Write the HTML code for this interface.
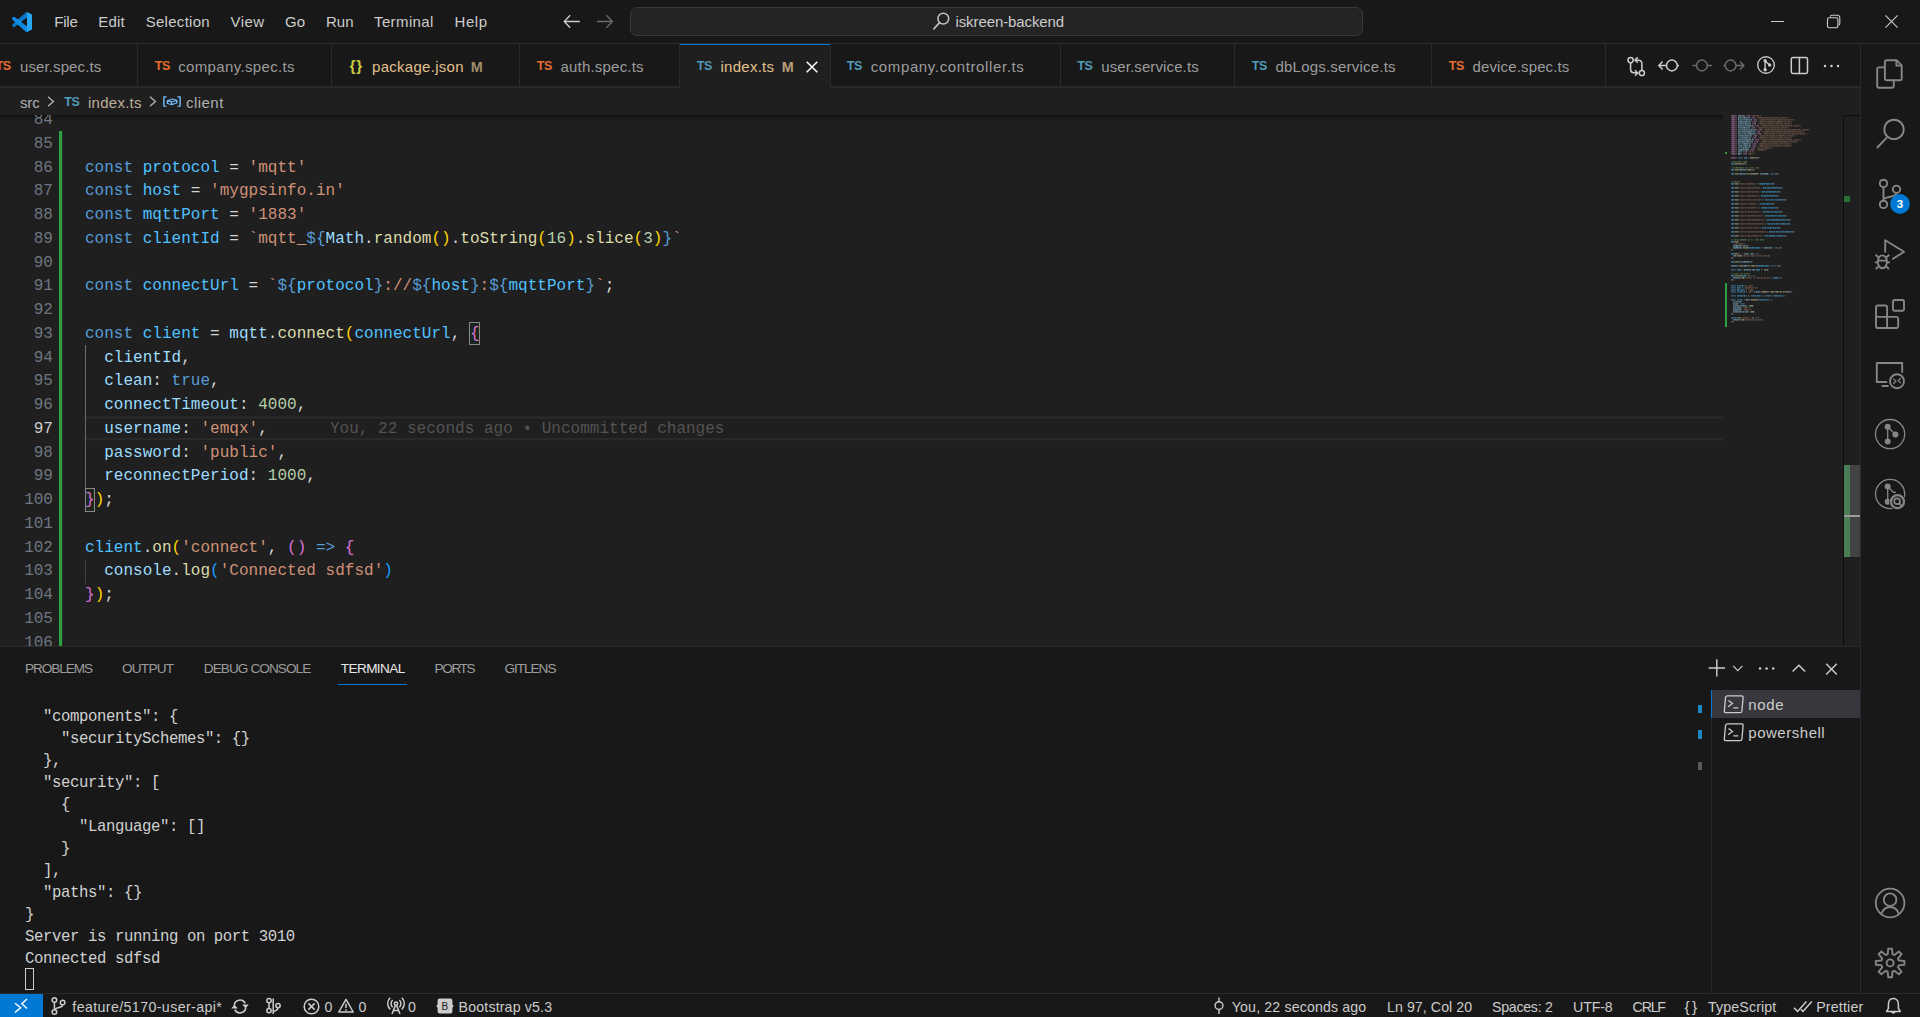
<!DOCTYPE html>
<html lang="en"><head><meta charset="utf-8"><title>index.ts - iskreen-backend - Visual Studio Code</title>
<style>
html,body{margin:0;padding:0}
body{width:1920px;height:1017px;overflow:hidden;position:relative;background:#181818;font-family:"Liberation Sans",sans-serif}
body div,body span,body svg{position:absolute;display:block}
span.s{font-family:"Liberation Sans",sans-serif;line-height:1;white-space:pre}
span.m{font-family:"Liberation Mono",monospace;line-height:1;white-space:pre}
span.m span, span.s span{position:static;display:inline}
svg{overflow:visible}
</style></head>
<body>
<div style="left:0px;top:0px;width:1920px;height:43px;background:#181818;"></div>
<div style="left:0px;top:43px;width:1920px;height:1px;background:#2b2b2b;"></div>
<div style="left:0px;top:44px;width:1860px;height:43px;background:#181818;"></div>
<div style="left:0px;top:86px;width:1860px;height:2px;background:#292929;"></div>
<div style="left:0px;top:88px;width:1860px;height:558px;background:#1f1f1f;"></div>
<div style="left:1860px;top:44px;width:1px;height:949px;background:#2b2b2b;"></div>
<div style="left:1861px;top:44px;width:59px;height:949px;background:#181818;"></div>
<div style="left:0px;top:646px;width:1860px;height:1px;background:#2b2b2b;"></div>
<div style="left:0px;top:647px;width:1860px;height:346px;background:#181818;"></div>
<div style="left:0px;top:993px;width:1920px;height:1px;background:#2b2b2b;"></div>
<div style="left:0px;top:994px;width:1920px;height:23px;background:#181818;"></div>
<span class="s" style="left:54.20px;top:14.30px;font-size:15px;color:#cccccc;letter-spacing:-0.192px;">File</span>
<span class="s" style="left:98.20px;top:14.30px;font-size:15px;color:#cccccc;letter-spacing:0.238px;">Edit</span>
<span class="s" style="left:145.70px;top:14.30px;font-size:15px;color:#cccccc;letter-spacing:0.288px;">Selection</span>
<span class="s" style="left:230.50px;top:14.30px;font-size:15px;color:#cccccc;letter-spacing:0.465px;">View</span>
<span class="s" style="left:285.00px;top:14.30px;font-size:15px;color:#cccccc;letter-spacing:-0.005px;">Go</span>
<span class="s" style="left:326.00px;top:14.30px;font-size:15px;color:#cccccc;letter-spacing:0.028px;">Run</span>
<span class="s" style="left:374.00px;top:14.30px;font-size:15px;color:#cccccc;letter-spacing:0.390px;">Terminal</span>
<span class="s" style="left:454.50px;top:14.30px;font-size:15px;color:#cccccc;letter-spacing:0.563px;">Help</span>
<div style="left:630px;top:7px;width:731px;height:27px;background:#242424;border:1px solid #393939;border-radius:7px;box-sizing:content-box"></div>
<span class="s" style="left:955.50px;top:14.30px;font-size:15px;color:#cccccc;letter-spacing:-0.104px;">iskreen-backend</span>
<div style="left:680px;top:44px;width:150px;height:44px;background:#1f1f1f;"></div>
<div style="left:680px;top:44px;width:150px;height:1px;background:#0078d4;"></div>
<div style="left:137px;top:44px;width:1px;height:43px;background:#2b2b2b;"></div>
<span class="s" style="left:-4.30px;top:59.82px;font-size:12.5px;color:#e56d30;letter-spacing:-0.486px;font-weight:700;">TS</span>
<span class="s" style="left:20.00px;top:59.30px;font-size:15px;color:#9d9d9d;letter-spacing:0.105px;">user.spec.ts</span>
<div style="left:331px;top:44px;width:1px;height:43px;background:#2b2b2b;"></div>
<span class="s" style="left:154.80px;top:59.82px;font-size:12.5px;color:#e56d30;letter-spacing:-0.486px;font-weight:700;">TS</span>
<span class="s" style="left:178.20px;top:59.30px;font-size:15px;color:#9d9d9d;letter-spacing:0.357px;">company.spec.ts</span>
<div style="left:519px;top:44px;width:1px;height:43px;background:#2b2b2b;"></div>
<span class="s" style="left:349.50px;top:58.48px;font-size:15.5px;color:#cbcb41;letter-spacing:0.768px;font-weight:700;">{}</span>
<span class="s" style="left:372.00px;top:59.30px;font-size:15px;color:#e2c08d;letter-spacing:0.284px;">package.json</span>
<div style="left:679px;top:44px;width:1px;height:43px;background:#2b2b2b;"></div>
<span class="s" style="left:536.80px;top:59.82px;font-size:12.5px;color:#e56d30;letter-spacing:-0.486px;font-weight:700;">TS</span>
<span class="s" style="left:560.50px;top:59.30px;font-size:15px;color:#9d9d9d;letter-spacing:0.202px;">auth.spec.ts</span>
<div style="left:830px;top:44px;width:1px;height:43px;background:#2b2b2b;"></div>
<span class="s" style="left:696.80px;top:59.82px;font-size:12.5px;color:#519aba;letter-spacing:-0.486px;font-weight:700;">TS</span>
<span class="s" style="left:720.50px;top:59.30px;font-size:15px;color:#e2c08d;letter-spacing:0.263px;">index.ts</span>
<div style="left:1060px;top:44px;width:1px;height:43px;background:#2b2b2b;"></div>
<span class="s" style="left:846.80px;top:59.82px;font-size:12.5px;color:#519aba;letter-spacing:-0.486px;font-weight:700;">TS</span>
<span class="s" style="left:870.70px;top:59.30px;font-size:15px;color:#9d9d9d;letter-spacing:0.628px;">company.controller.ts</span>
<div style="left:1234px;top:44px;width:1px;height:43px;background:#2b2b2b;"></div>
<span class="s" style="left:1077.30px;top:59.82px;font-size:12.5px;color:#519aba;letter-spacing:-0.486px;font-weight:700;">TS</span>
<span class="s" style="left:1101.20px;top:59.30px;font-size:15px;color:#9d9d9d;letter-spacing:0.116px;">user.service.ts</span>
<div style="left:1431px;top:44px;width:1px;height:43px;background:#2b2b2b;"></div>
<span class="s" style="left:1251.80px;top:59.82px;font-size:12.5px;color:#519aba;letter-spacing:-0.486px;font-weight:700;">TS</span>
<span class="s" style="left:1275.50px;top:59.30px;font-size:15px;color:#9d9d9d;letter-spacing:0.210px;">dbLogs.service.ts</span>
<div style="left:1605px;top:44px;width:1px;height:43px;background:#2b2b2b;"></div>
<span class="s" style="left:1448.80px;top:59.82px;font-size:12.5px;color:#e56d30;letter-spacing:-0.486px;font-weight:700;">TS</span>
<span class="s" style="left:1472.50px;top:59.30px;font-size:15px;color:#9d9d9d;letter-spacing:0.140px;">device.spec.ts</span>
<div style="left:679px;top:44px;width:1px;height:43px;background:#2b2b2b;"></div>
<span class="s" style="left:470.80px;top:59.81px;font-size:14.4px;color:#a08c6a;font-weight:700;">M</span>
<span class="s" style="left:781.80px;top:59.81px;font-size:14.4px;color:#b8a07a;font-weight:700;">M</span>
<svg style="left:806px;top:60.5px" width="12" height="12" viewBox="0 0 12 12"><path d="M0.7 0.7 L11.3 11.3 M11.3 0.7 L0.7 11.3" stroke="#ffffff" stroke-width="1.5" fill="none"/></svg>
<span class="s" style="left:20.00px;top:94.80px;font-size:15px;color:#b0b0b0;letter-spacing:-0.132px;">src</span>
<span class="s" style="left:88.00px;top:94.80px;font-size:15px;color:#bcae98;letter-spacing:0.263px;">index.ts</span>
<span class="s" style="left:186.00px;top:94.80px;font-size:15px;color:#b0b0b0;letter-spacing:0.464px;">client</span>
<span class="s" style="left:64.30px;top:95.62px;font-size:12.5px;color:#519aba;letter-spacing:-0.486px;font-weight:700;">TS</span>
<svg style="left:47px;top:96.2px" width="8" height="11" viewBox="0 0 8 11"><path d="M1 0.8 L6.4 5.5 L1 10.2" stroke="#b0b0b0" stroke-width="1.4" fill="none"/></svg>
<svg style="left:149.4px;top:96.2px" width="8" height="11" viewBox="0 0 8 11"><path d="M1 0.8 L6.4 5.5 L1 10.2" stroke="#b0b0b0" stroke-width="1.4" fill="none"/></svg>
<svg style="left:163px;top:96px" width="18" height="11.6" viewBox="0 0 18 16" preserveAspectRatio="none"><g stroke="#75beff" stroke-width="1.4" fill="none"><path d="M3.6 1.2 H0.9 V14.2 H3.6"/><path d="M14.4 1.2 H17.1 V14.2 H14.4"/><path d="M4.4 6.6 L9.6 4.2 L13.8 5.9 V9.6 L8.6 12 L4.4 10.3 Z M4.4 6.6 L8.6 8.3 L13.8 5.9 M8.6 8.3 V12"/></g></svg>
<div style="left:0;top:115px;width:1723px;height:6px;background:linear-gradient(#000000 0%,rgba(0,0,0,0.55) 30%,rgba(0,0,0,0) 100%);opacity:0.55"></div>
<svg style="left:12px;top:12px;" width="20" height="20" viewBox="0 0 100 100"><defs><clipPath id="vc"><path clip-rule="evenodd" d="M96.46 10.8 L75.86 .88 a6.23 6.23 0 0 0 -7.1 1.2 L29.35 38.04 12.17 25 a4.16 4.16 0 0 0 -5.32 .24 l-5.5 5 a4.17 4.17 0 0 0 0 6.16 L16.25 50 1.35 63.6 a4.17 4.17 0 0 0 0 6.16 l5.5 5 a4.16 4.16 0 0 0 5.32 .24 l17.18 -13.04 39.4 35.96 a6.22 6.22 0 0 0 7.1 1.2 l20.6 -9.9 A6.25 6.25 0 0 0 100 83.6 V16.4 a6.25 6.25 0 0 0 -3.54 -5.6 Z M75 72.7 L45.1 50 75 27.3 Z"/></clipPath></defs>
<g clip-path="url(#vc)"><rect width="100" height="100" fill="#0b76c4"/><polygon points="0,22 14,20 78,70 78,100 66,100 0,40" fill="#0d8be0"/><rect x="74.6" y="0" width="26" height="100" fill="#27a6f4"/></g></svg>
<svg style="left:563px;top:14px;" width="18" height="15" viewBox="0 0 18 15"><path d="M16.8 7.5 H1.2 M7.2 1.2 L1.2 7.5 L7.2 13.8" stroke="#cccccc" stroke-width="1.3" fill="none"/></svg>
<svg style="left:596px;top:14px;" width="18" height="15" viewBox="0 0 18 15"><path d="M1 7.5 H16.4 M10.4 1.2 L16.4 7.5 L10.4 13.8" stroke="#6e6e6e" stroke-width="1.3" fill="none"/></svg>
<svg style="left:932px;top:11px;" width="20" height="20" viewBox="0 0 20 20"><circle cx="11.3" cy="7.6" r="5.4" stroke="#c4c4c4" stroke-width="1.5" fill="none"/><path d="M7.6 11.6 L1.4 18.4" stroke="#c4c4c4" stroke-width="1.6" fill="none"/></svg>
<div style="left:1771px;top:21px;width:13px;height:1px;background:#cccccc;"></div>
<svg style="left:1826px;top:14px;" width="15" height="15" viewBox="0 0 15 15"><rect x="1.5" y="3.8" width="10.4" height="10" rx="1.7" stroke="#cccccc" stroke-width="1.1" fill="none"/><path d="M4.3 2.5 a1.7 1.7 0 0 1 1.5 -1.3 H11.2 a2.6 2.6 0 0 1 2.6 2.6 V9.6 a1.7 1.7 0 0 1 -1.3 1.6" stroke="#cccccc" stroke-width="1.1" fill="none"/></svg>
<svg style="left:1885px;top:15px;" width="13" height="13" viewBox="0 0 13 13"><path d="M0.4 0.4 L12.6 12.6 M12.6 0.4 L0.4 12.6" stroke="#cccccc" stroke-width="1.1" fill="none"/></svg>
<svg style="left:1626px;top:55px;" width="22" height="22" viewBox="0 0 22 22"><g stroke="#cccccc" stroke-width="1.5" fill="none">
<circle cx="4.6" cy="5.1" r="2.6"/><circle cx="15.9" cy="18" r="2.6"/>
<path d="M4.6 7.7 V14.6 a3.2 3.2 0 0 0 3.2 3.2 H11.4 M9 15.2 L11.8 17.9 L9 20.6"/>
<path d="M15.9 15.4 V8.4 a3.2 3.2 0 0 0 -3.2 -3.2 H9.4 M11.8 2.4 L9 5.1 L11.8 7.8"/></g></svg>
<svg style="left:1657px;top:57px;" width="24" height="17" viewBox="0 0 24 17"><g stroke="#cccccc" stroke-width="1.5" fill="none"><circle cx="14.9" cy="8.5" r="5.4"/><path d="M9.4 8.5 H1.8 M5.6 4.6 L1.8 8.5 L5.6 12.4 M20.4 8.5 H22"/></g></svg>
<svg style="left:1691px;top:57px;" width="22" height="17" viewBox="0 0 22 17"><g stroke="#6b6b6b" stroke-width="1.5" fill="none"><circle cx="10.9" cy="8.5" r="5.4"/><path d="M1.5 8.5 H5.4 M16.4 8.5 H20.9"/></g></svg>
<svg style="left:1722px;top:57px;" width="24" height="17" viewBox="0 0 24 17"><g stroke="#6b6b6b" stroke-width="1.5" fill="none"><circle cx="8.6" cy="8.5" r="5.4"/><path d="M14.1 8.5 H21.8 M18 4.6 L21.8 8.5 L18 12.4 M1.5 8.5 H3.1"/></g></svg>
<svg style="left:1757px;top:56px;" width="18" height="18" viewBox="0 0 20 20"><circle cx="10" cy="10" r="9.2" stroke="#cccccc" stroke-width="1.5" fill="none"/>
<path d="M9 5.2 V15.2 M9 5.6 L14 10" stroke="#cccccc" stroke-width="1.5" fill="none"/>
<circle cx="9" cy="5.2" r="1.9" fill="#cccccc"/><circle cx="9" cy="15.2" r="1.9" fill="#cccccc"/><circle cx="14" cy="10" r="1.9" fill="#cccccc"/></svg>
<svg style="left:1790px;top:56px;" width="19" height="19" viewBox="0 0 19 19"><g stroke="#cccccc" stroke-width="1.5" fill="none"><rect x="1.3" y="1.6" width="16.2" height="15.8" rx="1.6"/><path d="M9.4 1.6 V17.4"/></g></svg>
<svg style="left:1822px;top:63px;" width="20" height="6" viewBox="0 0 20 6"><circle cx="3" cy="3.1" r="1.25" fill="#cccccc"/><circle cx="9.5" cy="3.1" r="1.25" fill="#cccccc"/><circle cx="16" cy="3.1" r="1.25" fill="#cccccc"/></svg>
<svg style="left:0;top:0" width="1920" height="1017" viewBox="0 0 1920 1017"><g stroke="#868686" stroke-width="1.9" fill="none" stroke-linejoin="round">
<!-- files -->
<path d="M1884.9 79.2 V62 a1.8 1.8 0 0 1 1.8 -1.8 H1896.6 L1901.7 65.3 V78.4 a1.8 1.8 0 0 1 -1.8 1.8 H1886.7 a1.8 1.8 0 0 1 -1.8 -1.8 Z"/>
<path d="M1896.4 60.6 V65.6 H1901.4"/>
<path d="M1884.6 67.4 H1879 a1.8 1.8 0 0 0 -1.8 1.8 V86 a1.8 1.8 0 0 0 1.8 1.8 H1892 a1.8 1.8 0 0 0 1.8 -1.8 V80.6"/>
<!-- search -->
<circle cx="1894" cy="129.4" r="9.7"/>
<path d="M1887 137.4 L1876.9 148"/>
<!-- scm -->
<circle cx="1883.5" cy="183.4" r="3.7"/><circle cx="1883.5" cy="204.4" r="3.7"/><circle cx="1896.5" cy="189.3" r="3.7"/>
<path d="M1883.5 187.1 V200.7 M1896.5 193 C1896.5 197.2 1889 196 1884 198.6"/>
<!-- debug -->
<path d="M1885.2 252.5 V240.3 L1904 251.8 L1892.2 259.3"/>
<ellipse cx="1882.4" cy="261.8" rx="4.6" ry="6.4"/>
<path d="M1877.8 260.6 H1887 M1878.4 257.4 L1875.6 254.8 M1886.4 257.4 L1889.2 254.8 M1877.8 262.4 H1874.8 M1887 262.4 H1890 M1878.6 266.4 L1875.8 269 M1886.2 266.4 L1889 269"/>
<!-- extensions -->
<path d="M1887.1 316.9 V307.3 a1.8 1.8 0 0 0 -1.8 -1.8 H1877.8 a1.8 1.8 0 0 0 -1.8 1.8 V326.2 a1.8 1.8 0 0 0 1.8 1.8 H1896.4 a1.8 1.8 0 0 0 1.8 -1.8 V318.7 a1.8 1.8 0 0 0 -1.8 -1.8 Z M1876 316.9 H1887.1 V328"/>
<rect x="1893" y="300" width="11" height="10.8" rx="1.8"/>
<!-- remote explorer -->
<path d="M1902.2 372.8 V363 H1876.8 V382 H1887.2 M1881.6 386 H1888.6"/>
<circle cx="1897" cy="381.2" r="7"/>
</g>
<path d="M1893.2 378.6 L1896 381.2 L1893.2 383.8 M1900.8 378.2 L1898.2 380.6 L1900.8 383" stroke="#868686" stroke-width="1.2" fill="none"/>
<!-- gitlens -->
<g stroke="#868686" stroke-width="1.3" fill="none">
<circle cx="1890.1" cy="434.1" r="14.6"/>
<path d="M1887.7 426.7 V441.4 M1887.7 426.7 L1895.4 434.5"/>
<circle cx="1890.1" cy="494" r="14.6"/>
<path d="M1887.7 486.6 V501.7 M1887.7 486.6 L1893.4 492.3 H1896"/>
</g>
<g fill="#868686"><circle cx="1887.7" cy="426.7" r="3"/><circle cx="1887.7" cy="441.4" r="3"/><circle cx="1895.4" cy="434.5" r="3"/>
<circle cx="1887.7" cy="486.6" r="3"/><circle cx="1887.7" cy="501.7" r="3"/></g>
<circle cx="1897.5" cy="501.7" r="8.4" fill="#181818"/>
<circle cx="1897.5" cy="501.7" r="6.5" fill="none" stroke="#868686" stroke-width="2.3"/>
<circle cx="1897.1" cy="501.3" r="2.9" fill="none" stroke="#868686" stroke-width="1.8"/>
<path d="M1899.4 503.6 L1902 506.2" stroke="#868686" stroke-width="1.8"/>
<!-- account -->
<g stroke="#868686" stroke-width="1.8" fill="none">
<circle cx="1890.1" cy="903" r="14.3"/>
<circle cx="1890.1" cy="899.7" r="6.3"/>
<path d="M1881.4 913.6 C1883 909.4 1886 907 1890.1 907 C1894.2 907 1897.2 909.4 1898.8 913.6"/>
<!-- gear -->
<path d="M1887.59 954.26 L1888.30 948.61 L1891.90 948.61 L1892.61 954.26 L1894.44 955.01 L1898.93 951.52 L1901.48 954.07 L1897.99 958.56 L1898.74 960.39 L1904.39 961.10 L1904.39 964.70 L1898.74 965.41 L1897.99 967.24 L1901.48 971.73 L1898.93 974.28 L1894.44 970.79 L1892.61 971.54 L1891.90 977.19 L1888.30 977.19 L1887.59 971.54 L1885.76 970.79 L1881.27 974.28 L1878.72 971.73 L1882.21 967.24 L1881.46 965.41 L1875.81 964.70 L1875.81 961.10 L1881.46 960.39 L1882.21 958.56 L1878.72 954.07 L1881.27 951.52 L1885.76 955.01 Z" stroke-width="1.9" stroke-linejoin="miter"/>
<circle cx="1890.1" cy="962.9" r="3.5" stroke-width="1.9"/>
</g>
<!-- badge -->
<circle cx="1900" cy="204" r="9.9" fill="#0078d4"/>
</svg>
<span class="s" style="left:1896.80px;top:199.17px;font-size:11.5px;color:#ffffff;font-weight:700;">3</span>
<div style="left:0;top:115px;width:1723px;height:531px;overflow:hidden">
<svg style="left:0;top:0" width="1723" height="531" viewBox="0 0 1723 531"><rect x="85.6" y="301.30" width="1640" height="2.4" fill="#292929"/><rect x="85.6" y="322.80" width="1640" height="2.4" fill="#292929"/><rect x="59.0" y="16.00" width="3.1" height="520" fill="#2ea043"/></svg>
<div style="left:85px;top:230.25px;width:1px;height:142.5px;background:#6a6a6a;"></div>
<div style="left:85px;top:444.0px;width:1px;height:23.75px;background:#404040;"></div>
<div style="left:469.30px;top:206.50px;width:10.22px;height:23.75px;border:1px solid #888888;background:rgba(0,100,0,0.1);box-sizing:border-box"></div>
<div style="left:84.50px;top:372.75px;width:10.22px;height:23.75px;border:1px solid #888888;background:rgba(0,100,0,0.1);box-sizing:border-box"></div>
<span class="m" style="left:33.76px;top:-2.92px;font-size:16px;letter-spacing:0.020px;color:#6e7681">84</span>
<span class="m" style="left:33.76px;top:20.83px;font-size:16px;letter-spacing:0.020px;color:#6e7681">85</span>
<span class="m" style="left:33.76px;top:44.58px;font-size:16px;letter-spacing:0.020px;color:#6e7681">86</span>
<span class="m" style="left:85px;top:44.58px;font-size:16px;letter-spacing:0.020px"><span style="color:#569cd6">const</span><span style="color:#4fc1ff"> protocol</span><span style="color:#d4d4d4"> = </span><span style="color:#ce9178">'mqtt'</span></span>
<span class="m" style="left:33.76px;top:68.33px;font-size:16px;letter-spacing:0.020px;color:#6e7681">87</span>
<span class="m" style="left:85px;top:68.33px;font-size:16px;letter-spacing:0.020px"><span style="color:#569cd6">const</span><span style="color:#4fc1ff"> host</span><span style="color:#d4d4d4"> = </span><span style="color:#ce9178">'mygpsinfo.in'</span></span>
<span class="m" style="left:33.76px;top:92.08px;font-size:16px;letter-spacing:0.020px;color:#6e7681">88</span>
<span class="m" style="left:85px;top:92.08px;font-size:16px;letter-spacing:0.020px"><span style="color:#569cd6">const</span><span style="color:#4fc1ff"> mqttPort</span><span style="color:#d4d4d4"> = </span><span style="color:#ce9178">'1883'</span></span>
<span class="m" style="left:33.76px;top:115.83px;font-size:16px;letter-spacing:0.020px;color:#6e7681">89</span>
<span class="m" style="left:85px;top:115.83px;font-size:16px;letter-spacing:0.020px"><span style="color:#569cd6">const</span><span style="color:#4fc1ff"> clientId</span><span style="color:#d4d4d4"> = </span><span style="color:#ce9178">`mqtt_</span><span style="color:#569cd6">${</span><span style="color:#9cdcfe">Math</span><span style="color:#d4d4d4">.</span><span style="color:#dcdcaa">random</span><span style="color:#ffd700">()</span><span style="color:#d4d4d4">.</span><span style="color:#dcdcaa">toString</span><span style="color:#ffd700">(</span><span style="color:#b5cea8">16</span><span style="color:#ffd700">)</span><span style="color:#d4d4d4">.</span><span style="color:#dcdcaa">slice</span><span style="color:#ffd700">(</span><span style="color:#b5cea8">3</span><span style="color:#ffd700">)</span><span style="color:#569cd6">}</span><span style="color:#ce9178">`</span></span>
<span class="m" style="left:33.76px;top:139.58px;font-size:16px;letter-spacing:0.020px;color:#6e7681">90</span>
<span class="m" style="left:33.76px;top:163.33px;font-size:16px;letter-spacing:0.020px;color:#6e7681">91</span>
<span class="m" style="left:85px;top:163.33px;font-size:16px;letter-spacing:0.020px"><span style="color:#569cd6">const</span><span style="color:#4fc1ff"> connectUrl</span><span style="color:#d4d4d4"> = </span><span style="color:#ce9178">`</span><span style="color:#569cd6">${</span><span style="color:#4fc1ff">protocol</span><span style="color:#569cd6">}</span><span style="color:#ce9178">://</span><span style="color:#569cd6">${</span><span style="color:#4fc1ff">host</span><span style="color:#569cd6">}</span><span style="color:#ce9178">:</span><span style="color:#569cd6">${</span><span style="color:#4fc1ff">mqttPort</span><span style="color:#569cd6">}</span><span style="color:#ce9178">`</span><span style="color:#d4d4d4">;</span></span>
<span class="m" style="left:33.76px;top:187.08px;font-size:16px;letter-spacing:0.020px;color:#6e7681">92</span>
<span class="m" style="left:33.76px;top:210.83px;font-size:16px;letter-spacing:0.020px;color:#6e7681">93</span>
<span class="m" style="left:85px;top:210.83px;font-size:16px;letter-spacing:0.020px"><span style="color:#569cd6">const</span><span style="color:#4fc1ff"> client</span><span style="color:#d4d4d4"> = </span><span style="color:#9cdcfe">mqtt</span><span style="color:#d4d4d4">.</span><span style="color:#dcdcaa">connect</span><span style="color:#ffd700">(</span><span style="color:#4fc1ff">connectUrl</span><span style="color:#d4d4d4">, </span><span style="color:#da70d6">{</span></span>
<span class="m" style="left:33.76px;top:234.58px;font-size:16px;letter-spacing:0.020px;color:#6e7681">94</span>
<span class="m" style="left:85px;top:234.58px;font-size:16px;letter-spacing:0.020px"><span style="color:#9cdcfe">  clientId</span><span style="color:#d4d4d4">,</span></span>
<span class="m" style="left:33.76px;top:258.33px;font-size:16px;letter-spacing:0.020px;color:#6e7681">95</span>
<span class="m" style="left:85px;top:258.33px;font-size:16px;letter-spacing:0.020px"><span style="color:#9cdcfe">  clean</span><span style="color:#d4d4d4">: </span><span style="color:#569cd6">true</span><span style="color:#d4d4d4">,</span></span>
<span class="m" style="left:33.76px;top:282.08px;font-size:16px;letter-spacing:0.020px;color:#6e7681">96</span>
<span class="m" style="left:85px;top:282.08px;font-size:16px;letter-spacing:0.020px"><span style="color:#9cdcfe">  connectTimeout</span><span style="color:#d4d4d4">: </span><span style="color:#b5cea8">4000</span><span style="color:#d4d4d4">,</span></span>
<span class="m" style="left:33.76px;top:305.83px;font-size:16px;letter-spacing:0.020px;color:#cccccc">97</span>
<span class="m" style="left:85px;top:305.83px;font-size:16px;letter-spacing:0.020px"><span style="color:#9cdcfe">  username</span><span style="color:#d4d4d4">: </span><span style="color:#ce9178">'emqx'</span><span style="color:#d4d4d4">,</span></span>
<span class="m" style="left:33.76px;top:329.58px;font-size:16px;letter-spacing:0.020px;color:#6e7681">98</span>
<span class="m" style="left:85px;top:329.58px;font-size:16px;letter-spacing:0.020px"><span style="color:#9cdcfe">  password</span><span style="color:#d4d4d4">: </span><span style="color:#ce9178">'public'</span><span style="color:#d4d4d4">,</span></span>
<span class="m" style="left:33.76px;top:353.33px;font-size:16px;letter-spacing:0.020px;color:#6e7681">99</span>
<span class="m" style="left:85px;top:353.33px;font-size:16px;letter-spacing:0.020px"><span style="color:#9cdcfe">  reconnectPeriod</span><span style="color:#d4d4d4">: </span><span style="color:#b5cea8">1000</span><span style="color:#d4d4d4">,</span></span>
<span class="m" style="left:24.14px;top:377.08px;font-size:16px;letter-spacing:0.020px;color:#6e7681">100</span>
<span class="m" style="left:85px;top:377.08px;font-size:16px;letter-spacing:0.020px"><span style="color:#da70d6">}</span><span style="color:#ffd700">)</span><span style="color:#d4d4d4">;</span></span>
<span class="m" style="left:24.14px;top:400.83px;font-size:16px;letter-spacing:0.020px;color:#6e7681">101</span>
<span class="m" style="left:24.14px;top:424.58px;font-size:16px;letter-spacing:0.020px;color:#6e7681">102</span>
<span class="m" style="left:85px;top:424.58px;font-size:16px;letter-spacing:0.020px"><span style="color:#4fc1ff">client</span><span style="color:#d4d4d4">.</span><span style="color:#dcdcaa">on</span><span style="color:#ffd700">(</span><span style="color:#ce9178">'connect'</span><span style="color:#d4d4d4">, </span><span style="color:#da70d6">()</span><span style="color:#d4d4d4"> </span><span style="color:#569cd6">=&gt;</span><span style="color:#d4d4d4"> </span><span style="color:#da70d6">{</span></span>
<span class="m" style="left:24.14px;top:448.33px;font-size:16px;letter-spacing:0.020px;color:#6e7681">103</span>
<span class="m" style="left:85px;top:448.33px;font-size:16px;letter-spacing:0.020px"><span style="color:#9cdcfe">  console</span><span style="color:#d4d4d4">.</span><span style="color:#dcdcaa">log</span><span style="color:#179fff">(</span><span style="color:#ce9178">'Connected sdfsd'</span><span style="color:#179fff">)</span></span>
<span class="m" style="left:24.14px;top:472.08px;font-size:16px;letter-spacing:0.020px;color:#6e7681">104</span>
<span class="m" style="left:85px;top:472.08px;font-size:16px;letter-spacing:0.020px"><span style="color:#da70d6">}</span><span style="color:#ffd700">)</span><span style="color:#d4d4d4">;</span></span>
<span class="m" style="left:24.14px;top:495.83px;font-size:16px;letter-spacing:0.020px;color:#6e7681">105</span>
<span class="m" style="left:24.14px;top:519.58px;font-size:16px;letter-spacing:0.020px;color:#6e7681">106</span>
<span class="m" style="left:330px;top:305.83px;font-size:16px;letter-spacing:0.020px;color:#535353">You, 22 seconds ago • Uncommitted changes</span>
</div>
<svg style="left:1731px;top:115px;" width="120" height="215" viewBox="0 0 120 215"><path fill="#c586c0" fill-opacity="0.40" d="M0 0.2h1v1.4h-1zM4 0.2h2v1.4h-2zM15 0.2h2v1.4h-2zM0 2.2h1v1.4h-1zM4 2.2h2v1.4h-2zM20 2.2h2v1.4h-2zM0 4.2h1v1.4h-1zM4 4.2h2v1.4h-2zM22 4.2h2v1.4h-2zM0 6.2h1v1.4h-1zM4 6.2h2v1.4h-2zM21 6.2h2v1.4h-2zM0 8.2h1v1.4h-1zM4 8.2h2v1.4h-2zM21 8.2h2v1.4h-2zM0 10.2h1v1.4h-1zM4 10.2h2v1.4h-2zM24 10.2h2v1.4h-2zM0 12.2h1v1.4h-1zM4 12.2h2v1.4h-2zM20 12.2h2v1.4h-2zM0 14.2h1v1.4h-1zM4 14.2h2v1.4h-2zM27 14.2h2v1.4h-2zM0 16.2h1v1.4h-1zM4 16.2h2v1.4h-2zM25 16.2h2v1.4h-2zM0 18.2h1v1.4h-1zM4 18.2h2v1.4h-2zM26 18.2h2v1.4h-2zM0 20.2h1v1.4h-1zM4 20.2h2v1.4h-2zM22 20.2h2v1.4h-2zM0 22.2h1v1.4h-1zM4 22.2h2v1.4h-2zM21 22.2h2v1.4h-2zM0 24.2h1v1.4h-1zM4 24.2h2v1.4h-2zM24 24.2h2v1.4h-2zM0 26.2h1v1.4h-1zM4 26.2h2v1.4h-2zM23 26.2h2v1.4h-2zM0 28.2h1v1.4h-1zM4 28.2h2v1.4h-2zM21 28.2h2v1.4h-2zM0 30.2h1v1.4h-1zM4 30.2h2v1.4h-2zM21 30.2h2v1.4h-2zM0 32.2h1v1.4h-1zM4 32.2h2v1.4h-2zM20 32.2h2v1.4h-2zM0 34.2h1v1.4h-1zM4 34.2h2v1.4h-2zM19 34.2h2v1.4h-2zM0 36.2h1v1.4h-1zM4 36.2h2v1.4h-2zM12 36.2h2v1.4h-2zM0 38.2h1v1.4h-1zM4 38.2h2v1.4h-2zM12 38.2h2v1.4h-2zM4 42.2h2v1.4h-2z"/><path fill="#c586c0" fill-opacity="0.72" d="M1 0.2h2v1.4h-2zM18 0.2h1v1.4h-1zM1 2.2h2v1.4h-2zM23 2.2h1v1.4h-1zM1 4.2h2v1.4h-2zM25 4.2h1v1.4h-1zM1 6.2h2v1.4h-2zM24 6.2h1v1.4h-1zM1 8.2h2v1.4h-2zM24 8.2h1v1.4h-1zM1 10.2h2v1.4h-2zM27 10.2h1v1.4h-1zM1 12.2h2v1.4h-2zM23 12.2h1v1.4h-1zM1 14.2h2v1.4h-2zM30 14.2h1v1.4h-1zM1 16.2h2v1.4h-2zM28 16.2h1v1.4h-1zM1 18.2h2v1.4h-2zM29 18.2h1v1.4h-1zM1 20.2h2v1.4h-2zM25 20.2h1v1.4h-1zM1 22.2h2v1.4h-2zM24 22.2h1v1.4h-1zM1 24.2h2v1.4h-2zM27 24.2h1v1.4h-1zM1 26.2h2v1.4h-2zM26 26.2h1v1.4h-1zM1 28.2h2v1.4h-2zM24 28.2h1v1.4h-1zM1 30.2h2v1.4h-2zM24 30.2h1v1.4h-1zM1 32.2h2v1.4h-2zM23 32.2h1v1.4h-1zM1 34.2h2v1.4h-2zM22 34.2h1v1.4h-1zM1 36.2h2v1.4h-2zM15 36.2h1v1.4h-1zM1 38.2h2v1.4h-2zM15 38.2h1v1.4h-1zM2 42.2h1v1.4h-1z"/><path fill="#c586c0" fill-opacity="0.55" d="M3 0.2h1v1.4h-1zM17 0.2h1v1.4h-1zM3 2.2h1v1.4h-1zM22 2.2h1v1.4h-1zM3 4.2h1v1.4h-1zM24 4.2h1v1.4h-1zM3 6.2h1v1.4h-1zM23 6.2h1v1.4h-1zM3 8.2h1v1.4h-1zM23 8.2h1v1.4h-1zM3 10.2h1v1.4h-1zM26 10.2h1v1.4h-1zM3 12.2h1v1.4h-1zM22 12.2h1v1.4h-1zM3 14.2h1v1.4h-1zM29 14.2h1v1.4h-1zM3 16.2h1v1.4h-1zM27 16.2h1v1.4h-1zM3 18.2h1v1.4h-1zM28 18.2h1v1.4h-1zM3 20.2h1v1.4h-1zM24 20.2h1v1.4h-1zM3 22.2h1v1.4h-1zM23 22.2h1v1.4h-1zM3 24.2h1v1.4h-1zM26 24.2h1v1.4h-1zM3 26.2h1v1.4h-1zM25 26.2h1v1.4h-1zM3 28.2h1v1.4h-1zM23 28.2h1v1.4h-1zM3 30.2h1v1.4h-1zM23 30.2h1v1.4h-1zM3 32.2h1v1.4h-1zM22 32.2h1v1.4h-1zM3 34.2h1v1.4h-1zM21 34.2h1v1.4h-1zM3 36.2h1v1.4h-1zM14 36.2h1v1.4h-1zM3 38.2h1v1.4h-1zM14 38.2h1v1.4h-1zM0 42.2h2v1.4h-2zM3 42.2h1v1.4h-1z"/><path fill="#9cdcfe" fill-opacity="0.55" d="M7 0.2h2v1.4h-2zM11 0.2h3v1.4h-3zM8 2.2h2v1.4h-2zM11 2.2h2v1.4h-2zM14 2.2h2v1.4h-2zM17 2.2h2v1.4h-2zM9 4.2h2v1.4h-2zM13 4.2h1v1.4h-1zM16 4.2h2v1.4h-2zM19 4.2h2v1.4h-2zM7 6.2h2v1.4h-2zM11 6.2h3v1.4h-3zM15 6.2h2v1.4h-2zM18 6.2h2v1.4h-2zM7 8.2h3v1.4h-3zM11 8.2h2v1.4h-2zM15 8.2h2v1.4h-2zM18 8.2h2v1.4h-2zM8 10.2h1v1.4h-1zM12 10.2h2v1.4h-2zM15 10.2h2v1.4h-2zM18 10.2h2v1.4h-2zM21 10.2h2v1.4h-2zM7 12.2h2v1.4h-2zM10 12.2h3v1.4h-3zM14 12.2h2v1.4h-2zM17 12.2h2v1.4h-2zM7 14.2h2v1.4h-2zM10 14.2h6v1.4h-6zM17 14.2h2v1.4h-2zM21 14.2h2v1.4h-2zM24 14.2h2v1.4h-2zM8 16.2h2v1.4h-2zM11 16.2h2v1.4h-2zM15 16.2h2v1.4h-2zM19 16.2h2v1.4h-2zM22 16.2h2v1.4h-2zM7 18.2h2v1.4h-2zM13 18.2h2v1.4h-2zM17 18.2h2v1.4h-2zM20 18.2h2v1.4h-2zM23 18.2h2v1.4h-2zM7 20.2h4v1.4h-4zM12 20.2h1v1.4h-1zM14 20.2h1v1.4h-1zM16 20.2h2v1.4h-2zM19 20.2h2v1.4h-2zM9 22.2h5v1.4h-5zM15 22.2h2v1.4h-2zM18 22.2h2v1.4h-2zM8 24.2h2v1.4h-2zM11 24.2h4v1.4h-4zM16 24.2h1v1.4h-1zM18 24.2h2v1.4h-2zM21 24.2h2v1.4h-2zM8 26.2h3v1.4h-3zM12 26.2h2v1.4h-2zM17 26.2h2v1.4h-2zM20 26.2h2v1.4h-2zM12 28.2h1v1.4h-1zM15 28.2h2v1.4h-2zM18 28.2h2v1.4h-2zM8 30.2h1v1.4h-1zM10 30.2h1v1.4h-1zM13 30.2h1v1.4h-1zM15 30.2h2v1.4h-2zM18 30.2h2v1.4h-2zM7 32.2h1v1.4h-1zM10 32.2h1v1.4h-1zM13 32.2h2v1.4h-2zM17 32.2h1v1.4h-1zM7 34.2h1v1.4h-1zM9 34.2h1v1.4h-1zM12 34.2h1v1.4h-1zM16 34.2h2v1.4h-2zM7 36.2h2v1.4h-2zM10 36.2h1v1.4h-1zM8 54.2h2v1.4h-2zM12 54.2h3v1.4h-3zM8 58.2h2v1.4h-2zM12 58.2h3v1.4h-3zM29 58.2h2v1.4h-2zM32 58.2h2v1.4h-2zM35 58.2h1v1.4h-1zM2 130.2h1v1.4h-1zM4 130.2h1v1.4h-1zM7 130.2h1v1.4h-1zM12 130.2h2v1.4h-2zM15 130.2h2v1.4h-2zM2 132.2h1v1.4h-1zM4 132.2h1v1.4h-1zM7 132.2h1v1.4h-1zM33 132.2h2v1.4h-2zM37 132.2h1v1.4h-1zM39 132.2h1v1.4h-1zM15 138.2h1v1.4h-1zM20 138.2h2v1.4h-2zM3 140.2h2v1.4h-2zM8 146.2h1v1.4h-1zM11 146.2h1v1.4h-1zM14 146.2h2v1.4h-2zM18 146.2h1v1.4h-1zM0 150.2h5v1.4h-5zM6 150.2h1v1.4h-1zM12 150.2h1v1.4h-1zM15 154.2h5v1.4h-5zM21 154.2h3v1.4h-3zM2 162.2h5v1.4h-5zM8 162.2h1v1.4h-1zM26 176.2h1v1.4h-1zM28 176.2h1v1.4h-1zM2 186.2h1v1.4h-1zM5 186.2h2v1.4h-2zM2 188.2h1v1.4h-1zM4 188.2h3v1.4h-3zM2 190.2h6v1.4h-6zM9 190.2h1v1.4h-1zM12 190.2h3v1.4h-3zM2 192.2h3v1.4h-3zM6 192.2h2v1.4h-2zM9 192.2h1v1.4h-1zM3 194.2h3v1.4h-3zM7 194.2h1v1.4h-1zM3 196.2h7v1.4h-7zM11 196.2h2v1.4h-2zM15 196.2h1v1.4h-1zM2 204.2h5v1.4h-5zM8 204.2h1v1.4h-1z"/><path fill="#9cdcfe" fill-opacity="0.72" d="M9 0.2h1v1.4h-1zM7 2.2h1v1.4h-1zM13 2.2h1v1.4h-1zM7 4.2h1v1.4h-1zM15 4.2h1v1.4h-1zM9 6.2h2v1.4h-2zM14 6.2h1v1.4h-1zM14 8.2h1v1.4h-1zM7 10.2h1v1.4h-1zM10 10.2h1v1.4h-1zM17 10.2h1v1.4h-1zM13 12.2h1v1.4h-1zM20 14.2h1v1.4h-1zM7 16.2h1v1.4h-1zM13 16.2h1v1.4h-1zM17 16.2h2v1.4h-2zM19 18.2h1v1.4h-1zM11 20.2h1v1.4h-1zM15 20.2h1v1.4h-1zM14 22.2h1v1.4h-1zM7 24.2h1v1.4h-1zM15 24.2h1v1.4h-1zM17 24.2h1v1.4h-1zM7 26.2h1v1.4h-1zM11 26.2h1v1.4h-1zM15 26.2h2v1.4h-2zM7 28.2h1v1.4h-1zM13 28.2h2v1.4h-2zM9 30.2h1v1.4h-1zM14 30.2h1v1.4h-1zM12 32.2h1v1.4h-1zM15 32.2h1v1.4h-1zM8 34.2h1v1.4h-1zM10 34.2h2v1.4h-2zM14 34.2h2v1.4h-2zM7 38.2h2v1.4h-2zM10 54.2h1v1.4h-1zM10 58.2h1v1.4h-1zM34 58.2h1v1.4h-1zM36 58.2h1v1.4h-1zM3 130.2h1v1.4h-1zM5 130.2h2v1.4h-2zM9 130.2h1v1.4h-1zM3 132.2h1v1.4h-1zM5 132.2h2v1.4h-2zM9 132.2h1v1.4h-1zM35 132.2h1v1.4h-1zM16 138.2h1v1.4h-1zM13 146.2h1v1.4h-1zM16 146.2h1v1.4h-1zM13 150.2h3v1.4h-3zM13 154.2h1v1.4h-1zM25 176.2h1v1.4h-1zM15 184.2h2v1.4h-2zM9 186.2h1v1.4h-1zM11 190.2h1v1.4h-1zM8 192.2h1v1.4h-1zM2 194.2h1v1.4h-1zM6 194.2h1v1.4h-1zM9 194.2h1v1.4h-1zM16 196.2h1v1.4h-1z"/><path fill="#9cdcfe" fill-opacity="0.40" d="M10 0.2h1v1.4h-1zM10 2.2h1v1.4h-1zM16 2.2h1v1.4h-1zM8 4.2h1v1.4h-1zM11 4.2h2v1.4h-2zM14 4.2h1v1.4h-1zM18 4.2h1v1.4h-1zM17 6.2h1v1.4h-1zM10 8.2h1v1.4h-1zM13 8.2h1v1.4h-1zM17 8.2h1v1.4h-1zM9 10.2h1v1.4h-1zM11 10.2h1v1.4h-1zM14 10.2h1v1.4h-1zM20 10.2h1v1.4h-1zM9 12.2h1v1.4h-1zM16 12.2h1v1.4h-1zM9 14.2h1v1.4h-1zM16 14.2h1v1.4h-1zM19 14.2h1v1.4h-1zM23 14.2h1v1.4h-1zM10 16.2h1v1.4h-1zM14 16.2h1v1.4h-1zM21 16.2h1v1.4h-1zM9 18.2h4v1.4h-4zM15 18.2h2v1.4h-2zM22 18.2h1v1.4h-1zM13 20.2h1v1.4h-1zM18 20.2h1v1.4h-1zM7 22.2h2v1.4h-2zM17 22.2h1v1.4h-1zM10 24.2h1v1.4h-1zM20 24.2h1v1.4h-1zM14 26.2h1v1.4h-1zM19 26.2h1v1.4h-1zM8 28.2h4v1.4h-4zM17 28.2h1v1.4h-1zM7 30.2h1v1.4h-1zM11 30.2h2v1.4h-2zM17 30.2h1v1.4h-1zM8 32.2h2v1.4h-2zM11 32.2h1v1.4h-1zM16 32.2h1v1.4h-1zM18 32.2h1v1.4h-1zM13 34.2h1v1.4h-1zM9 36.2h1v1.4h-1zM9 38.2h2v1.4h-2zM11 54.2h1v1.4h-1zM11 58.2h1v1.4h-1zM31 58.2h1v1.4h-1zM8 130.2h1v1.4h-1zM10 130.2h1v1.4h-1zM14 130.2h1v1.4h-1zM8 132.2h1v1.4h-1zM10 132.2h1v1.4h-1zM36 132.2h1v1.4h-1zM38 132.2h1v1.4h-1zM40 132.2h1v1.4h-1zM14 138.2h1v1.4h-1zM19 138.2h1v1.4h-1zM2 140.2h1v1.4h-1zM9 146.2h2v1.4h-2zM12 146.2h1v1.4h-1zM17 146.2h1v1.4h-1zM19 146.2h1v1.4h-1zM5 150.2h1v1.4h-1zM14 154.2h1v1.4h-1zM7 162.2h1v1.4h-1zM27 176.2h1v1.4h-1zM17 184.2h2v1.4h-2zM3 186.2h2v1.4h-2zM7 186.2h2v1.4h-2zM3 188.2h1v1.4h-1zM8 190.2h1v1.4h-1zM10 190.2h1v1.4h-1zM15 190.2h1v1.4h-1zM5 192.2h1v1.4h-1zM8 194.2h1v1.4h-1zM2 196.2h1v1.4h-1zM10 196.2h1v1.4h-1zM13 196.2h2v1.4h-2zM7 204.2h1v1.4h-1z"/><path fill="#ce9178" fill-opacity="0.15" d="M20 0.2h1v1.4h-1zM28 0.2h1v1.4h-1zM25 2.2h2v1.4h-2zM49 2.2h1v1.4h-1zM56 2.2h1v1.4h-1zM27 4.2h2v1.4h-2zM55 4.2h1v1.4h-1zM62 4.2h1v1.4h-1zM26 6.2h2v1.4h-2zM52 6.2h1v1.4h-1zM59 6.2h1v1.4h-1zM26 8.2h2v1.4h-2zM52 8.2h1v1.4h-1zM59 8.2h1v1.4h-1zM29 10.2h2v1.4h-2zM61 10.2h1v1.4h-1zM68 10.2h1v1.4h-1zM25 12.2h2v1.4h-2zM49 12.2h1v1.4h-1zM56 12.2h1v1.4h-1zM32 14.2h2v1.4h-2zM70 14.2h1v1.4h-1zM77 14.2h1v1.4h-1zM30 16.2h2v1.4h-2zM64 16.2h1v1.4h-1zM71 16.2h1v1.4h-1zM31 18.2h2v1.4h-2zM67 18.2h1v1.4h-1zM74 18.2h1v1.4h-1zM27 20.2h2v1.4h-2zM55 20.2h1v1.4h-1zM62 20.2h1v1.4h-1zM26 22.2h2v1.4h-2zM52 22.2h1v1.4h-1zM59 22.2h1v1.4h-1zM29 24.2h2v1.4h-2zM61 24.2h1v1.4h-1zM68 24.2h1v1.4h-1zM28 26.2h2v1.4h-2zM58 26.2h1v1.4h-1zM65 26.2h1v1.4h-1zM26 28.2h2v1.4h-2zM52 28.2h1v1.4h-1zM59 28.2h1v1.4h-1zM26 30.2h2v1.4h-2zM52 30.2h1v1.4h-1zM59 30.2h1v1.4h-1zM25 32.2h2v1.4h-2zM40 32.2h1v1.4h-1zM24 34.2h2v1.4h-2zM34 34.2h1v1.4h-1zM17 36.2h1v1.4h-1zM22 36.2h1v1.4h-1zM17 38.2h1v1.4h-1zM22 38.2h1v1.4h-1zM8 68.2h1v1.4h-1zM25 68.2h1v1.4h-1zM8 72.2h1v1.4h-1zM29 72.2h1v1.4h-1zM8 76.2h1v1.4h-1zM28 76.2h1v1.4h-1zM8 80.2h1v1.4h-1zM27 80.2h1v1.4h-1zM8 84.2h1v1.4h-1zM31 84.2h1v1.4h-1zM8 88.2h1v1.4h-1zM25 88.2h1v1.4h-1zM8 92.2h1v1.4h-1zM27 92.2h1v1.4h-1zM8 96.2h1v1.4h-1zM29 96.2h1v1.4h-1zM8 100.2h1v1.4h-1zM31 100.2h1v1.4h-1zM8 104.2h1v1.4h-1zM33 104.2h1v1.4h-1zM8 108.2h1v1.4h-1zM33 108.2h1v1.4h-1zM8 112.2h1v1.4h-1zM28 112.2h1v1.4h-1zM8 116.2h1v1.4h-1zM35 116.2h1v1.4h-1zM8 120.2h1v1.4h-1zM31 120.2h1v1.4h-1zM2 128.2h1v1.4h-1zM7 128.2h1v1.4h-1zM12 128.2h1v1.4h-1zM8 138.2h1v1.4h-1zM10 138.2h1v1.4h-1zM11 140.2h1v1.4h-1zM36 140.2h1v1.4h-1zM14 162.2h1v1.4h-1zM48 162.2h1v1.4h-1zM17 170.2h1v1.4h-1zM22 170.2h1v1.4h-1zM13 172.2h1v1.4h-1zM23 172.2h1v1.4h-1zM26 172.2h1v1.4h-1zM17 174.2h1v1.4h-1zM22 174.2h1v1.4h-1zM17 176.2h1v1.4h-1zM22 176.2h1v1.4h-1zM61 176.2h1v1.4h-1zM19 180.2h1v1.4h-1zM31 180.2h1v1.4h-1zM41 180.2h1v1.4h-1zM53 180.2h1v1.4h-1zM12 192.2h1v1.4h-1zM17 192.2h1v1.4h-1zM12 194.2h1v1.4h-1zM19 194.2h1v1.4h-1zM10 202.2h1v1.4h-1zM18 202.2h1v1.4h-1zM14 204.2h1v1.4h-1zM30 204.2h1v1.4h-1z"/><path fill="#ce9178" fill-opacity="0.39" d="M21 0.2h2v1.4h-2zM25 0.2h3v1.4h-3zM29 2.2h1v1.4h-1zM31 2.2h1v1.4h-1zM33 2.2h2v1.4h-2zM37 2.2h2v1.4h-2zM40 2.2h2v1.4h-2zM44 2.2h2v1.4h-2zM47 2.2h2v1.4h-2zM51 2.2h2v1.4h-2zM54 2.2h2v1.4h-2zM31 4.2h1v1.4h-1zM33 4.2h1v1.4h-1zM35 4.2h2v1.4h-2zM40 4.2h2v1.4h-2zM44 4.2h1v1.4h-1zM49 4.2h2v1.4h-2zM53 4.2h1v1.4h-1zM57 4.2h2v1.4h-2zM60 4.2h2v1.4h-2zM30 6.2h1v1.4h-1zM32 6.2h1v1.4h-1zM34 6.2h2v1.4h-2zM37 6.2h2v1.4h-2zM41 6.2h3v1.4h-3zM45 6.2h2v1.4h-2zM49 6.2h3v1.4h-3zM54 6.2h2v1.4h-2zM57 6.2h2v1.4h-2zM30 8.2h1v1.4h-1zM32 8.2h1v1.4h-1zM34 8.2h2v1.4h-2zM37 8.2h3v1.4h-3zM41 8.2h2v1.4h-2zM45 8.2h3v1.4h-3zM49 8.2h2v1.4h-2zM54 8.2h2v1.4h-2zM57 8.2h2v1.4h-2zM33 10.2h1v1.4h-1zM35 10.2h1v1.4h-1zM37 10.2h2v1.4h-2zM41 10.2h1v1.4h-1zM45 10.2h2v1.4h-2zM48 10.2h2v1.4h-2zM52 10.2h1v1.4h-1zM56 10.2h2v1.4h-2zM59 10.2h2v1.4h-2zM63 10.2h2v1.4h-2zM66 10.2h2v1.4h-2zM29 12.2h1v1.4h-1zM31 12.2h1v1.4h-1zM33 12.2h2v1.4h-2zM36 12.2h2v1.4h-2zM39 12.2h3v1.4h-3zM43 12.2h2v1.4h-2zM46 12.2h3v1.4h-3zM51 12.2h2v1.4h-2zM54 12.2h2v1.4h-2zM36 14.2h1v1.4h-1zM38 14.2h1v1.4h-1zM40 14.2h2v1.4h-2zM43 14.2h2v1.4h-2zM46 14.2h6v1.4h-6zM53 14.2h2v1.4h-2zM57 14.2h2v1.4h-2zM60 14.2h6v1.4h-6zM67 14.2h2v1.4h-2zM72 14.2h2v1.4h-2zM75 14.2h2v1.4h-2zM34 16.2h1v1.4h-1zM36 16.2h1v1.4h-1zM38 16.2h2v1.4h-2zM42 16.2h2v1.4h-2zM45 16.2h2v1.4h-2zM49 16.2h2v1.4h-2zM54 16.2h2v1.4h-2zM57 16.2h2v1.4h-2zM61 16.2h2v1.4h-2zM66 16.2h2v1.4h-2zM69 16.2h2v1.4h-2zM35 18.2h1v1.4h-1zM37 18.2h1v1.4h-1zM39 18.2h2v1.4h-2zM42 18.2h2v1.4h-2zM48 18.2h2v1.4h-2zM52 18.2h2v1.4h-2zM55 18.2h2v1.4h-2zM61 18.2h2v1.4h-2zM65 18.2h2v1.4h-2zM69 18.2h2v1.4h-2zM72 18.2h2v1.4h-2zM31 20.2h1v1.4h-1zM33 20.2h1v1.4h-1zM35 20.2h2v1.4h-2zM38 20.2h4v1.4h-4zM43 20.2h1v1.4h-1zM45 20.2h1v1.4h-1zM47 20.2h4v1.4h-4zM52 20.2h1v1.4h-1zM54 20.2h1v1.4h-1zM57 20.2h2v1.4h-2zM60 20.2h2v1.4h-2zM30 22.2h1v1.4h-1zM32 22.2h1v1.4h-1zM34 22.2h2v1.4h-2zM39 22.2h5v1.4h-5zM47 22.2h5v1.4h-5zM54 22.2h2v1.4h-2zM57 22.2h2v1.4h-2zM33 24.2h1v1.4h-1zM35 24.2h1v1.4h-1zM37 24.2h2v1.4h-2zM41 24.2h2v1.4h-2zM44 24.2h4v1.4h-4zM49 24.2h1v1.4h-1zM52 24.2h2v1.4h-2zM55 24.2h4v1.4h-4zM60 24.2h1v1.4h-1zM63 24.2h2v1.4h-2zM66 24.2h2v1.4h-2zM32 26.2h1v1.4h-1zM34 26.2h1v1.4h-1zM36 26.2h2v1.4h-2zM40 26.2h3v1.4h-3zM44 26.2h2v1.4h-2zM50 26.2h3v1.4h-3zM54 26.2h2v1.4h-2zM60 26.2h2v1.4h-2zM63 26.2h2v1.4h-2zM30 28.2h1v1.4h-1zM32 28.2h1v1.4h-1zM34 28.2h2v1.4h-2zM42 28.2h1v1.4h-1zM50 28.2h1v1.4h-1zM54 28.2h2v1.4h-2zM57 28.2h2v1.4h-2zM30 30.2h1v1.4h-1zM32 30.2h1v1.4h-1zM34 30.2h2v1.4h-2zM38 30.2h1v1.4h-1zM40 30.2h1v1.4h-1zM43 30.2h1v1.4h-1zM46 30.2h1v1.4h-1zM48 30.2h1v1.4h-1zM51 30.2h1v1.4h-1zM54 30.2h2v1.4h-2zM57 30.2h2v1.4h-2zM28 32.2h1v1.4h-1zM31 32.2h1v1.4h-1zM34 32.2h2v1.4h-2zM38 32.2h1v1.4h-1zM27 34.2h1v1.4h-1zM29 34.2h1v1.4h-1zM32 34.2h1v1.4h-1zM18 36.2h2v1.4h-2zM21 36.2h1v1.4h-1zM10 68.2h1v1.4h-1zM14 68.2h1v1.4h-1zM17 68.2h2v1.4h-2zM21 68.2h3v1.4h-3zM10 72.2h1v1.4h-1zM14 72.2h1v1.4h-1zM18 72.2h2v1.4h-2zM21 72.2h2v1.4h-2zM25 72.2h2v1.4h-2zM10 76.2h1v1.4h-1zM14 76.2h1v1.4h-1zM18 76.2h2v1.4h-2zM21 76.2h4v1.4h-4zM26 76.2h1v1.4h-1zM10 80.2h1v1.4h-1zM14 80.2h1v1.4h-1zM18 80.2h3v1.4h-3zM22 80.2h2v1.4h-2zM10 84.2h1v1.4h-1zM14 84.2h1v1.4h-1zM17 84.2h2v1.4h-2zM23 84.2h2v1.4h-2zM27 84.2h2v1.4h-2zM10 88.2h1v1.4h-1zM14 88.2h1v1.4h-1zM19 88.2h5v1.4h-5zM10 92.2h1v1.4h-1zM14 92.2h1v1.4h-1zM17 92.2h4v1.4h-4zM22 92.2h1v1.4h-1zM24 92.2h1v1.4h-1zM10 96.2h1v1.4h-1zM14 96.2h1v1.4h-1zM18 96.2h1v1.4h-1zM22 96.2h2v1.4h-2zM25 96.2h2v1.4h-2zM10 100.2h1v1.4h-1zM14 100.2h1v1.4h-1zM17 100.2h2v1.4h-2zM20 100.2h6v1.4h-6zM27 100.2h2v1.4h-2zM10 104.2h1v1.4h-1zM14 104.2h1v1.4h-1zM18 104.2h2v1.4h-2zM21 104.2h2v1.4h-2zM24 104.2h3v1.4h-3zM28 104.2h1v1.4h-1zM30 104.2h2v1.4h-2zM10 108.2h1v1.4h-1zM14 108.2h1v1.4h-1zM17 108.2h3v1.4h-3zM21 108.2h2v1.4h-2zM24 108.2h1v1.4h-1zM26 108.2h2v1.4h-2zM30 108.2h1v1.4h-1zM32 108.2h1v1.4h-1zM10 112.2h1v1.4h-1zM14 112.2h1v1.4h-1zM19 112.2h2v1.4h-2zM23 112.2h1v1.4h-1zM26 112.2h1v1.4h-1zM10 116.2h1v1.4h-1zM14 116.2h1v1.4h-1zM18 116.2h1v1.4h-1zM21 116.2h2v1.4h-2zM26 116.2h1v1.4h-1zM28 116.2h4v1.4h-4zM33 116.2h2v1.4h-2zM10 120.2h1v1.4h-1zM14 120.2h1v1.4h-1zM18 120.2h2v1.4h-2zM21 120.2h2v1.4h-2zM24 120.2h1v1.4h-1zM26 120.2h1v1.4h-1zM29 120.2h1v1.4h-1zM4 128.2h1v1.4h-1zM9 128.2h3v1.4h-3zM12 140.2h1v1.4h-1zM16 140.2h3v1.4h-3zM21 140.2h3v1.4h-3zM26 140.2h1v1.4h-1zM30 140.2h1v1.4h-1zM33 140.2h2v1.4h-2zM16 162.2h1v1.4h-1zM18 162.2h2v1.4h-2zM23 162.2h1v1.4h-1zM26 162.2h3v1.4h-3zM30 162.2h1v1.4h-1zM33 162.2h2v1.4h-2zM37 162.2h1v1.4h-1zM15 172.2h1v1.4h-1zM18 172.2h1v1.4h-1zM20 172.2h1v1.4h-1zM22 172.2h1v1.4h-1zM25 172.2h1v1.4h-1zM21 174.2h1v1.4h-1zM13 192.2h1v1.4h-1zM16 192.2h1v1.4h-1zM14 194.2h1v1.4h-1zM18 194.2h1v1.4h-1zM11 202.2h6v1.4h-6zM15 204.2h6v1.4h-6zM22 204.2h1v1.4h-1zM25 204.2h1v1.4h-1zM28 204.2h1v1.4h-1z"/><path fill="#ce9178" fill-opacity="0.50" d="M23 0.2h1v1.4h-1zM28 2.2h1v1.4h-1zM30 2.2h1v1.4h-1zM36 2.2h1v1.4h-1zM43 2.2h1v1.4h-1zM30 4.2h1v1.4h-1zM32 4.2h1v1.4h-1zM38 4.2h1v1.4h-1zM47 4.2h1v1.4h-1zM29 6.2h1v1.4h-1zM31 6.2h1v1.4h-1zM39 6.2h2v1.4h-2zM47 6.2h2v1.4h-2zM29 8.2h1v1.4h-1zM31 8.2h1v1.4h-1zM32 10.2h1v1.4h-1zM34 10.2h1v1.4h-1zM40 10.2h1v1.4h-1zM43 10.2h1v1.4h-1zM51 10.2h1v1.4h-1zM54 10.2h1v1.4h-1zM28 12.2h1v1.4h-1zM30 12.2h1v1.4h-1zM35 14.2h1v1.4h-1zM37 14.2h1v1.4h-1zM33 16.2h1v1.4h-1zM35 16.2h1v1.4h-1zM41 16.2h1v1.4h-1zM47 16.2h1v1.4h-1zM51 16.2h1v1.4h-1zM53 16.2h1v1.4h-1zM59 16.2h1v1.4h-1zM63 16.2h1v1.4h-1zM34 18.2h1v1.4h-1zM36 18.2h1v1.4h-1zM30 20.2h1v1.4h-1zM32 20.2h1v1.4h-1zM42 20.2h1v1.4h-1zM51 20.2h1v1.4h-1zM29 22.2h1v1.4h-1zM31 22.2h1v1.4h-1zM32 24.2h1v1.4h-1zM34 24.2h1v1.4h-1zM40 24.2h1v1.4h-1zM48 24.2h1v1.4h-1zM51 24.2h1v1.4h-1zM59 24.2h1v1.4h-1zM31 26.2h1v1.4h-1zM33 26.2h1v1.4h-1zM39 26.2h1v1.4h-1zM43 26.2h1v1.4h-1zM47 26.2h1v1.4h-1zM49 26.2h1v1.4h-1zM53 26.2h1v1.4h-1zM57 26.2h1v1.4h-1zM29 28.2h1v1.4h-1zM31 28.2h1v1.4h-1zM37 28.2h1v1.4h-1zM43 28.2h1v1.4h-1zM45 28.2h1v1.4h-1zM51 28.2h1v1.4h-1zM29 30.2h1v1.4h-1zM31 30.2h1v1.4h-1zM39 30.2h1v1.4h-1zM47 30.2h1v1.4h-1zM33 32.2h1v1.4h-1zM36 32.2h1v1.4h-1zM28 34.2h1v1.4h-1zM30 34.2h2v1.4h-2zM18 38.2h2v1.4h-2zM11 68.2h1v1.4h-1zM19 68.2h2v1.4h-2zM11 72.2h1v1.4h-1zM17 72.2h1v1.4h-1zM23 72.2h1v1.4h-1zM27 72.2h1v1.4h-1zM11 76.2h1v1.4h-1zM17 76.2h1v1.4h-1zM25 76.2h1v1.4h-1zM11 80.2h1v1.4h-1zM17 80.2h1v1.4h-1zM21 80.2h1v1.4h-1zM25 80.2h1v1.4h-1zM11 84.2h1v1.4h-1zM11 88.2h1v1.4h-1zM11 92.2h1v1.4h-1zM21 92.2h1v1.4h-1zM11 96.2h1v1.4h-1zM17 96.2h1v1.4h-1zM20 96.2h1v1.4h-1zM11 100.2h1v1.4h-1zM11 104.2h1v1.4h-1zM17 104.2h1v1.4h-1zM23 104.2h1v1.4h-1zM27 104.2h1v1.4h-1zM11 108.2h1v1.4h-1zM11 112.2h1v1.4h-1zM17 112.2h1v1.4h-1zM25 112.2h1v1.4h-1zM11 116.2h1v1.4h-1zM17 116.2h1v1.4h-1zM19 116.2h1v1.4h-1zM24 116.2h1v1.4h-1zM11 120.2h1v1.4h-1zM17 120.2h1v1.4h-1zM23 120.2h1v1.4h-1zM25 120.2h1v1.4h-1zM5 128.2h1v1.4h-1zM8 128.2h1v1.4h-1zM13 140.2h2v1.4h-2zM20 140.2h1v1.4h-1zM35 140.2h1v1.4h-1zM15 162.2h1v1.4h-1zM31 162.2h1v1.4h-1zM36 162.2h1v1.4h-1zM18 170.2h2v1.4h-2zM14 172.2h1v1.4h-1zM16 172.2h2v1.4h-2zM19 174.2h2v1.4h-2zM18 176.2h2v1.4h-2zM14 192.2h2v1.4h-2zM13 194.2h1v1.4h-1zM15 194.2h1v1.4h-1zM23 204.2h1v1.4h-1zM26 204.2h1v1.4h-1zM29 204.2h1v1.4h-1z"/><path fill="#ce9178" fill-opacity="0.28" d="M24 0.2h1v1.4h-1zM27 2.2h1v1.4h-1zM32 2.2h1v1.4h-1zM35 2.2h1v1.4h-1zM39 2.2h1v1.4h-1zM42 2.2h1v1.4h-1zM46 2.2h1v1.4h-1zM50 2.2h1v1.4h-1zM53 2.2h1v1.4h-1zM29 4.2h1v1.4h-1zM34 4.2h1v1.4h-1zM37 4.2h1v1.4h-1zM39 4.2h1v1.4h-1zM42 4.2h2v1.4h-2zM45 4.2h2v1.4h-2zM48 4.2h1v1.4h-1zM51 4.2h2v1.4h-2zM54 4.2h1v1.4h-1zM56 4.2h1v1.4h-1zM59 4.2h1v1.4h-1zM28 6.2h1v1.4h-1zM33 6.2h1v1.4h-1zM36 6.2h1v1.4h-1zM44 6.2h1v1.4h-1zM53 6.2h1v1.4h-1zM56 6.2h1v1.4h-1zM28 8.2h1v1.4h-1zM33 8.2h1v1.4h-1zM36 8.2h1v1.4h-1zM40 8.2h1v1.4h-1zM43 8.2h2v1.4h-2zM48 8.2h1v1.4h-1zM51 8.2h1v1.4h-1zM53 8.2h1v1.4h-1zM56 8.2h1v1.4h-1zM31 10.2h1v1.4h-1zM36 10.2h1v1.4h-1zM39 10.2h1v1.4h-1zM42 10.2h1v1.4h-1zM44 10.2h1v1.4h-1zM47 10.2h1v1.4h-1zM50 10.2h1v1.4h-1zM53 10.2h1v1.4h-1zM55 10.2h1v1.4h-1zM58 10.2h1v1.4h-1zM62 10.2h1v1.4h-1zM65 10.2h1v1.4h-1zM27 12.2h1v1.4h-1zM32 12.2h1v1.4h-1zM35 12.2h1v1.4h-1zM38 12.2h1v1.4h-1zM42 12.2h1v1.4h-1zM45 12.2h1v1.4h-1zM50 12.2h1v1.4h-1zM53 12.2h1v1.4h-1zM34 14.2h1v1.4h-1zM39 14.2h1v1.4h-1zM42 14.2h1v1.4h-1zM45 14.2h1v1.4h-1zM52 14.2h1v1.4h-1zM55 14.2h2v1.4h-2zM59 14.2h1v1.4h-1zM66 14.2h1v1.4h-1zM69 14.2h1v1.4h-1zM71 14.2h1v1.4h-1zM74 14.2h1v1.4h-1zM32 16.2h1v1.4h-1zM37 16.2h1v1.4h-1zM40 16.2h1v1.4h-1zM44 16.2h1v1.4h-1zM48 16.2h1v1.4h-1zM52 16.2h1v1.4h-1zM56 16.2h1v1.4h-1zM60 16.2h1v1.4h-1zM65 16.2h1v1.4h-1zM68 16.2h1v1.4h-1zM33 18.2h1v1.4h-1zM38 18.2h1v1.4h-1zM41 18.2h1v1.4h-1zM44 18.2h4v1.4h-4zM50 18.2h2v1.4h-2zM54 18.2h1v1.4h-1zM57 18.2h4v1.4h-4zM63 18.2h2v1.4h-2zM68 18.2h1v1.4h-1zM71 18.2h1v1.4h-1zM29 20.2h1v1.4h-1zM34 20.2h1v1.4h-1zM37 20.2h1v1.4h-1zM44 20.2h1v1.4h-1zM46 20.2h1v1.4h-1zM53 20.2h1v1.4h-1zM56 20.2h1v1.4h-1zM59 20.2h1v1.4h-1zM28 22.2h1v1.4h-1zM33 22.2h1v1.4h-1zM36 22.2h3v1.4h-3zM44 22.2h3v1.4h-3zM53 22.2h1v1.4h-1zM56 22.2h1v1.4h-1zM31 24.2h1v1.4h-1zM36 24.2h1v1.4h-1zM39 24.2h1v1.4h-1zM43 24.2h1v1.4h-1zM50 24.2h1v1.4h-1zM54 24.2h1v1.4h-1zM62 24.2h1v1.4h-1zM65 24.2h1v1.4h-1zM30 26.2h1v1.4h-1zM35 26.2h1v1.4h-1zM38 26.2h1v1.4h-1zM46 26.2h1v1.4h-1zM48 26.2h1v1.4h-1zM56 26.2h1v1.4h-1zM59 26.2h1v1.4h-1zM62 26.2h1v1.4h-1zM28 28.2h1v1.4h-1zM33 28.2h1v1.4h-1zM36 28.2h1v1.4h-1zM38 28.2h4v1.4h-4zM44 28.2h1v1.4h-1zM46 28.2h4v1.4h-4zM53 28.2h1v1.4h-1zM56 28.2h1v1.4h-1zM28 30.2h1v1.4h-1zM33 30.2h1v1.4h-1zM36 30.2h2v1.4h-2zM41 30.2h2v1.4h-2zM44 30.2h2v1.4h-2zM49 30.2h2v1.4h-2zM53 30.2h1v1.4h-1zM56 30.2h1v1.4h-1zM27 32.2h1v1.4h-1zM29 32.2h2v1.4h-2zM32 32.2h1v1.4h-1zM37 32.2h1v1.4h-1zM39 32.2h1v1.4h-1zM26 34.2h1v1.4h-1zM33 34.2h1v1.4h-1zM20 36.2h1v1.4h-1zM20 38.2h2v1.4h-2zM9 68.2h1v1.4h-1zM12 68.2h2v1.4h-2zM15 68.2h2v1.4h-2zM24 68.2h1v1.4h-1zM9 72.2h1v1.4h-1zM12 72.2h2v1.4h-2zM15 72.2h2v1.4h-2zM20 72.2h1v1.4h-1zM24 72.2h1v1.4h-1zM28 72.2h1v1.4h-1zM9 76.2h1v1.4h-1zM12 76.2h2v1.4h-2zM15 76.2h2v1.4h-2zM20 76.2h1v1.4h-1zM27 76.2h1v1.4h-1zM9 80.2h1v1.4h-1zM12 80.2h2v1.4h-2zM15 80.2h2v1.4h-2zM24 80.2h1v1.4h-1zM26 80.2h1v1.4h-1zM9 84.2h1v1.4h-1zM12 84.2h2v1.4h-2zM15 84.2h2v1.4h-2zM19 84.2h4v1.4h-4zM25 84.2h2v1.4h-2zM29 84.2h2v1.4h-2zM9 88.2h1v1.4h-1zM12 88.2h2v1.4h-2zM15 88.2h4v1.4h-4zM24 88.2h1v1.4h-1zM9 92.2h1v1.4h-1zM12 92.2h2v1.4h-2zM15 92.2h2v1.4h-2zM23 92.2h1v1.4h-1zM25 92.2h2v1.4h-2zM9 96.2h1v1.4h-1zM12 96.2h2v1.4h-2zM15 96.2h2v1.4h-2zM19 96.2h1v1.4h-1zM21 96.2h1v1.4h-1zM24 96.2h1v1.4h-1zM27 96.2h2v1.4h-2zM9 100.2h1v1.4h-1zM12 100.2h2v1.4h-2zM15 100.2h2v1.4h-2zM19 100.2h1v1.4h-1zM26 100.2h1v1.4h-1zM29 100.2h2v1.4h-2zM9 104.2h1v1.4h-1zM12 104.2h2v1.4h-2zM15 104.2h2v1.4h-2zM20 104.2h1v1.4h-1zM29 104.2h1v1.4h-1zM32 104.2h1v1.4h-1zM9 108.2h1v1.4h-1zM12 108.2h2v1.4h-2zM15 108.2h2v1.4h-2zM20 108.2h1v1.4h-1zM23 108.2h1v1.4h-1zM25 108.2h1v1.4h-1zM28 108.2h2v1.4h-2zM31 108.2h1v1.4h-1zM9 112.2h1v1.4h-1zM12 112.2h2v1.4h-2zM15 112.2h2v1.4h-2zM18 112.2h1v1.4h-1zM21 112.2h2v1.4h-2zM24 112.2h1v1.4h-1zM27 112.2h1v1.4h-1zM9 116.2h1v1.4h-1zM12 116.2h2v1.4h-2zM15 116.2h2v1.4h-2zM20 116.2h1v1.4h-1zM23 116.2h1v1.4h-1zM25 116.2h1v1.4h-1zM27 116.2h1v1.4h-1zM32 116.2h1v1.4h-1zM9 120.2h1v1.4h-1zM12 120.2h2v1.4h-2zM15 120.2h2v1.4h-2zM20 120.2h1v1.4h-1zM27 120.2h2v1.4h-2zM30 120.2h1v1.4h-1zM3 128.2h1v1.4h-1zM6 128.2h1v1.4h-1zM9 138.2h1v1.4h-1zM25 140.2h1v1.4h-1zM27 140.2h3v1.4h-3zM31 140.2h2v1.4h-2zM17 162.2h1v1.4h-1zM20 162.2h1v1.4h-1zM22 162.2h1v1.4h-1zM25 162.2h1v1.4h-1zM29 162.2h1v1.4h-1zM38 162.2h2v1.4h-2zM20 170.2h2v1.4h-2zM19 172.2h1v1.4h-1zM21 172.2h1v1.4h-1zM24 172.2h1v1.4h-1zM18 174.2h1v1.4h-1zM20 176.2h2v1.4h-2zM32 180.2h2v1.4h-2zM16 194.2h2v1.4h-2zM17 202.2h1v1.4h-1zM21 204.2h1v1.4h-1zM27 204.2h1v1.4h-1z"/><path fill="#d4d4d4" fill-opacity="0.22" d="M29 0.2h1v1.4h-1zM57 2.2h1v1.4h-1zM63 4.2h1v1.4h-1zM60 6.2h1v1.4h-1zM60 8.2h1v1.4h-1zM69 10.2h1v1.4h-1zM57 12.2h1v1.4h-1zM78 14.2h1v1.4h-1zM72 16.2h1v1.4h-1zM75 18.2h1v1.4h-1zM63 20.2h1v1.4h-1zM60 22.2h1v1.4h-1zM69 24.2h1v1.4h-1zM66 26.2h1v1.4h-1zM60 28.2h1v1.4h-1zM60 30.2h1v1.4h-1zM41 32.2h1v1.4h-1zM35 34.2h1v1.4h-1zM23 36.2h1v1.4h-1zM23 38.2h1v1.4h-1zM28 42.2h1v1.4h-1zM3 48.2h1v1.4h-1zM15 48.2h1v1.4h-1zM3 54.2h1v1.4h-1zM15 54.2h1v1.4h-1zM23 54.2h1v1.4h-1zM3 58.2h1v1.4h-1zM15 58.2h1v1.4h-1zM37 58.2h1v1.4h-1zM47 58.2h1v1.4h-1zM3 68.2h1v1.4h-1zM26 68.2h1v1.4h-1zM43 68.2h1v1.4h-1zM3 72.2h1v1.4h-1zM30 72.2h1v1.4h-1zM51 72.2h1v1.4h-1zM3 76.2h1v1.4h-1zM29 76.2h1v1.4h-1zM49 76.2h1v1.4h-1zM3 80.2h1v1.4h-1zM28 80.2h1v1.4h-1zM47 80.2h1v1.4h-1zM3 84.2h1v1.4h-1zM32 84.2h1v1.4h-1zM55 84.2h1v1.4h-1zM3 88.2h1v1.4h-1zM26 88.2h1v1.4h-1zM43 88.2h1v1.4h-1zM3 92.2h1v1.4h-1zM28 92.2h1v1.4h-1zM47 92.2h1v1.4h-1zM3 96.2h1v1.4h-1zM30 96.2h1v1.4h-1zM51 96.2h1v1.4h-1zM3 100.2h1v1.4h-1zM32 100.2h1v1.4h-1zM55 100.2h1v1.4h-1zM3 104.2h1v1.4h-1zM34 104.2h1v1.4h-1zM59 104.2h1v1.4h-1zM3 108.2h1v1.4h-1zM34 108.2h1v1.4h-1zM59 108.2h1v1.4h-1zM3 112.2h1v1.4h-1zM29 112.2h1v1.4h-1zM49 112.2h1v1.4h-1zM3 116.2h1v1.4h-1zM36 116.2h1v1.4h-1zM63 116.2h1v1.4h-1zM3 120.2h1v1.4h-1zM32 120.2h1v1.4h-1zM55 120.2h1v1.4h-1zM3 126.2h1v1.4h-1zM13 128.2h1v1.4h-1zM11 130.2h1v1.4h-1zM17 130.2h1v1.4h-1zM11 132.2h1v1.4h-1zM29 132.2h1v1.4h-1zM41 132.2h1v1.4h-1zM50 132.2h1v1.4h-1zM1 134.2h1v1.4h-1zM3 138.2h1v1.4h-1zM11 138.2h1v1.4h-1zM17 138.2h1v1.4h-1zM5 140.2h1v1.4h-1zM38 140.2h1v1.4h-1zM2 142.2h1v1.4h-1zM3 146.2h1v1.4h-1zM21 146.2h1v1.4h-1zM7 150.2h1v1.4h-1zM16 150.2h1v1.4h-1zM38 150.2h1v1.4h-1zM44 150.2h1v1.4h-1zM49 150.2h1v1.4h-1zM20 154.2h1v1.4h-1zM24 154.2h1v1.4h-1zM30 154.2h2v1.4h-2zM37 154.2h1v1.4h-1zM3 160.2h1v1.4h-1zM15 160.2h1v1.4h-1zM9 162.2h1v1.4h-1zM50 162.2h1v1.4h-1zM2 164.2h1v1.4h-1zM29 176.2h1v1.4h-1zM38 176.2h1v1.4h-1zM51 176.2h1v1.4h-1zM54 180.2h1v1.4h-1zM19 184.2h1v1.4h-1zM38 184.2h1v1.4h-1zM10 186.2h1v1.4h-1zM7 188.2h1v1.4h-1zM13 188.2h1v1.4h-1zM16 190.2h1v1.4h-1zM22 190.2h1v1.4h-1zM10 192.2h1v1.4h-1zM18 192.2h1v1.4h-1zM10 194.2h1v1.4h-1zM20 194.2h1v1.4h-1zM17 196.2h1v1.4h-1zM23 196.2h1v1.4h-1zM2 198.2h1v1.4h-1zM6 202.2h1v1.4h-1zM19 202.2h1v1.4h-1zM9 204.2h1v1.4h-1zM2 206.2h1v1.4h-1z"/><path fill="#569cd6" fill-opacity="0.55" d="M7 42.2h4v1.4h-4zM41 58.2h2v1.4h-2zM45 132.2h2v1.4h-2zM40 150.2h2v1.4h-2zM0 154.2h4v1.4h-4zM41 162.2h1v1.4h-1zM0 170.2h4v1.4h-4zM0 172.2h4v1.4h-4zM0 174.2h4v1.4h-4zM0 176.2h4v1.4h-4zM23 176.2h1v1.4h-1zM0 180.2h4v1.4h-4zM20 180.2h1v1.4h-1zM34 180.2h1v1.4h-1zM42 180.2h1v1.4h-1zM0 184.2h4v1.4h-4zM11 188.2h2v1.4h-2z"/><path fill="#569cd6" fill-opacity="0.40" d="M11 42.2h1v1.4h-1zM39 58.2h2v1.4h-2zM43 132.2h2v1.4h-2zM24 138.2h2v1.4h-2zM42 150.2h2v1.4h-2zM4 154.2h1v1.4h-1zM20 160.2h2v1.4h-2zM42 162.2h1v1.4h-1zM47 162.2h1v1.4h-1zM4 170.2h1v1.4h-1zM4 172.2h1v1.4h-1zM4 174.2h1v1.4h-1zM4 176.2h1v1.4h-1zM24 176.2h1v1.4h-1zM60 176.2h1v1.4h-1zM4 180.2h1v1.4h-1zM21 180.2h1v1.4h-1zM30 180.2h1v1.4h-1zM35 180.2h1v1.4h-1zM40 180.2h1v1.4h-1zM43 180.2h1v1.4h-1zM52 180.2h1v1.4h-1zM4 184.2h1v1.4h-1zM9 188.2h2v1.4h-2zM24 202.2h2v1.4h-2z"/><path fill="#4fc1ff" fill-opacity="0.55" d="M13 42.2h1v1.4h-1zM0 48.2h1v1.4h-1zM0 54.2h1v1.4h-1zM0 58.2h1v1.4h-1zM0 68.2h1v1.4h-1zM28 68.2h2v1.4h-2zM32 68.2h3v1.4h-3zM37 68.2h2v1.4h-2zM40 68.2h2v1.4h-2zM0 72.2h1v1.4h-1zM33 72.2h2v1.4h-2zM36 72.2h2v1.4h-2zM40 72.2h2v1.4h-2zM45 72.2h2v1.4h-2zM48 72.2h2v1.4h-2zM0 76.2h1v1.4h-1zM32 76.2h2v1.4h-2zM35 76.2h4v1.4h-4zM40 76.2h1v1.4h-1zM43 76.2h2v1.4h-2zM46 76.2h2v1.4h-2zM0 80.2h1v1.4h-1zM31 80.2h3v1.4h-3zM35 80.2h2v1.4h-2zM41 80.2h2v1.4h-2zM44 80.2h2v1.4h-2zM0 84.2h1v1.4h-1zM34 84.2h2v1.4h-2zM40 84.2h2v1.4h-2zM44 84.2h2v1.4h-2zM49 84.2h2v1.4h-2zM52 84.2h2v1.4h-2zM0 88.2h1v1.4h-1zM30 88.2h5v1.4h-5zM37 88.2h2v1.4h-2zM40 88.2h2v1.4h-2zM0 92.2h1v1.4h-1zM30 92.2h4v1.4h-4zM35 92.2h1v1.4h-1zM37 92.2h1v1.4h-1zM41 92.2h2v1.4h-2zM44 92.2h2v1.4h-2zM0 96.2h1v1.4h-1zM33 96.2h1v1.4h-1zM37 96.2h2v1.4h-2zM40 96.2h2v1.4h-2zM45 96.2h2v1.4h-2zM48 96.2h2v1.4h-2zM0 100.2h1v1.4h-1zM34 100.2h2v1.4h-2zM37 100.2h6v1.4h-6zM44 100.2h2v1.4h-2zM49 100.2h2v1.4h-2zM52 100.2h2v1.4h-2zM0 104.2h1v1.4h-1zM37 104.2h2v1.4h-2zM40 104.2h2v1.4h-2zM43 104.2h3v1.4h-3zM47 104.2h1v1.4h-1zM49 104.2h2v1.4h-2zM53 104.2h2v1.4h-2zM56 104.2h2v1.4h-2zM0 108.2h1v1.4h-1zM36 108.2h3v1.4h-3zM40 108.2h2v1.4h-2zM43 108.2h1v1.4h-1zM45 108.2h2v1.4h-2zM49 108.2h1v1.4h-1zM51 108.2h1v1.4h-1zM53 108.2h2v1.4h-2zM56 108.2h2v1.4h-2zM0 112.2h1v1.4h-1zM33 112.2h2v1.4h-2zM37 112.2h1v1.4h-1zM40 112.2h1v1.4h-1zM43 112.2h2v1.4h-2zM46 112.2h2v1.4h-2zM0 116.2h1v1.4h-1zM39 116.2h1v1.4h-1zM42 116.2h2v1.4h-2zM47 116.2h1v1.4h-1zM49 116.2h4v1.4h-4zM54 116.2h2v1.4h-2zM57 116.2h2v1.4h-2zM60 116.2h2v1.4h-2zM0 120.2h1v1.4h-1zM35 120.2h2v1.4h-2zM38 120.2h2v1.4h-2zM41 120.2h1v1.4h-1zM43 120.2h1v1.4h-1zM46 120.2h1v1.4h-1zM49 120.2h2v1.4h-2zM52 120.2h2v1.4h-2zM0 126.2h1v1.4h-1zM18 132.2h1v1.4h-1zM20 132.2h1v1.4h-1zM23 132.2h1v1.4h-1zM27 132.2h2v1.4h-2zM0 138.2h1v1.4h-1zM0 146.2h1v1.4h-1zM27 150.2h1v1.4h-1zM29 150.2h1v1.4h-1zM32 150.2h1v1.4h-1zM36 150.2h2v1.4h-2zM6 154.2h1v1.4h-1zM9 154.2h1v1.4h-1zM25 154.2h1v1.4h-1zM28 154.2h1v1.4h-1zM0 160.2h1v1.4h-1zM11 160.2h1v1.4h-1zM14 160.2h1v1.4h-1zM43 162.2h1v1.4h-1zM46 162.2h1v1.4h-1zM8 170.2h1v1.4h-1zM10 170.2h3v1.4h-3zM6 172.2h3v1.4h-3zM10 174.2h2v1.4h-2zM6 176.2h1v1.4h-1zM9 176.2h2v1.4h-2zM6 180.2h6v1.4h-6zM24 180.2h1v1.4h-1zM26 180.2h3v1.4h-3zM36 180.2h3v1.4h-3zM48 180.2h2v1.4h-2zM6 184.2h1v1.4h-1zM9 184.2h2v1.4h-2zM28 184.2h6v1.4h-6zM0 202.2h1v1.4h-1zM3 202.2h2v1.4h-2z"/><path fill="#4fc1ff" fill-opacity="0.72" d="M14 42.2h2v1.4h-2zM1 48.2h2v1.4h-2zM1 54.2h2v1.4h-2zM1 58.2h2v1.4h-2zM1 68.2h2v1.4h-2zM30 68.2h2v1.4h-2zM36 68.2h1v1.4h-1zM1 72.2h2v1.4h-2zM32 72.2h1v1.4h-1zM38 72.2h1v1.4h-1zM42 72.2h1v1.4h-1zM44 72.2h1v1.4h-1zM1 76.2h2v1.4h-2zM31 76.2h1v1.4h-1zM39 76.2h1v1.4h-1zM42 76.2h1v1.4h-1zM1 80.2h2v1.4h-2zM30 80.2h1v1.4h-1zM34 80.2h1v1.4h-1zM38 80.2h1v1.4h-1zM40 80.2h1v1.4h-1zM1 84.2h2v1.4h-2zM48 84.2h1v1.4h-1zM1 88.2h2v1.4h-2zM36 88.2h1v1.4h-1zM1 92.2h2v1.4h-2zM34 92.2h1v1.4h-1zM40 92.2h1v1.4h-1zM1 96.2h2v1.4h-2zM32 96.2h1v1.4h-1zM35 96.2h1v1.4h-1zM44 96.2h1v1.4h-1zM1 100.2h2v1.4h-2zM48 100.2h1v1.4h-1zM1 104.2h2v1.4h-2zM36 104.2h1v1.4h-1zM42 104.2h1v1.4h-1zM46 104.2h1v1.4h-1zM52 104.2h1v1.4h-1zM1 108.2h2v1.4h-2zM52 108.2h1v1.4h-1zM1 112.2h2v1.4h-2zM31 112.2h1v1.4h-1zM39 112.2h1v1.4h-1zM42 112.2h1v1.4h-1zM1 116.2h2v1.4h-2zM38 116.2h1v1.4h-1zM40 116.2h1v1.4h-1zM45 116.2h1v1.4h-1zM56 116.2h1v1.4h-1zM1 120.2h2v1.4h-2zM34 120.2h1v1.4h-1zM40 120.2h1v1.4h-1zM42 120.2h1v1.4h-1zM48 120.2h1v1.4h-1zM1 126.2h2v1.4h-2zM19 132.2h1v1.4h-1zM21 132.2h2v1.4h-2zM25 132.2h2v1.4h-2zM1 138.2h2v1.4h-2zM1 146.2h2v1.4h-2zM28 150.2h1v1.4h-1zM30 150.2h2v1.4h-2zM34 150.2h2v1.4h-2zM7 154.2h2v1.4h-2zM26 154.2h2v1.4h-2zM1 160.2h2v1.4h-2zM12 160.2h2v1.4h-2zM44 162.2h2v1.4h-2zM6 170.2h1v1.4h-1zM6 174.2h2v1.4h-2zM13 176.2h1v1.4h-1zM13 180.2h1v1.4h-1zM22 180.2h1v1.4h-1zM44 180.2h2v1.4h-2zM35 184.2h1v1.4h-1z"/><path fill="#d4d4d4" fill-opacity="0.40" d="M17 42.2h1v1.4h-1zM26 42.2h2v1.4h-2zM7 48.2h1v1.4h-1zM12 48.2h3v1.4h-3zM7 54.2h1v1.4h-1zM20 54.2h3v1.4h-3zM7 58.2h1v1.4h-1zM26 58.2h2v1.4h-2zM44 58.2h3v1.4h-3zM7 68.2h1v1.4h-1zM42 68.2h1v1.4h-1zM7 72.2h1v1.4h-1zM50 72.2h1v1.4h-1zM7 76.2h1v1.4h-1zM48 76.2h1v1.4h-1zM7 80.2h1v1.4h-1zM46 80.2h1v1.4h-1zM7 84.2h1v1.4h-1zM54 84.2h1v1.4h-1zM7 88.2h1v1.4h-1zM42 88.2h1v1.4h-1zM7 92.2h1v1.4h-1zM46 92.2h1v1.4h-1zM7 96.2h1v1.4h-1zM50 96.2h1v1.4h-1zM7 100.2h1v1.4h-1zM54 100.2h1v1.4h-1zM7 104.2h1v1.4h-1zM58 104.2h1v1.4h-1zM7 108.2h1v1.4h-1zM58 108.2h1v1.4h-1zM7 112.2h1v1.4h-1zM48 112.2h1v1.4h-1zM7 116.2h1v1.4h-1zM62 116.2h1v1.4h-1zM7 120.2h1v1.4h-1zM54 120.2h1v1.4h-1zM7 126.2h1v1.4h-1zM17 132.2h1v1.4h-1zM31 132.2h1v1.4h-1zM48 132.2h2v1.4h-2zM0 134.2h1v1.4h-1zM7 138.2h1v1.4h-1zM13 138.2h1v1.4h-1zM22 138.2h1v1.4h-1zM27 138.2h1v1.4h-1zM10 140.2h1v1.4h-1zM37 140.2h1v1.4h-1zM0 142.2h2v1.4h-2zM7 146.2h1v1.4h-1zM20 146.2h1v1.4h-1zM11 150.2h1v1.4h-1zM26 150.2h1v1.4h-1zM47 150.2h2v1.4h-2zM11 154.2h1v1.4h-1zM10 160.2h1v1.4h-1zM17 160.2h2v1.4h-2zM23 160.2h1v1.4h-1zM13 162.2h1v1.4h-1zM49 162.2h1v1.4h-1zM0 164.2h2v1.4h-2zM15 170.2h1v1.4h-1zM11 172.2h1v1.4h-1zM15 174.2h1v1.4h-1zM15 176.2h1v1.4h-1zM36 176.2h2v1.4h-2zM47 176.2h1v1.4h-1zM50 176.2h1v1.4h-1zM57 176.2h1v1.4h-1zM59 176.2h1v1.4h-1zM17 180.2h1v1.4h-1zM13 184.2h1v1.4h-1zM27 184.2h1v1.4h-1zM40 184.2h1v1.4h-1zM0 198.2h2v1.4h-2zM9 202.2h1v1.4h-1zM21 202.2h2v1.4h-2zM27 202.2h1v1.4h-1zM13 204.2h1v1.4h-1zM31 204.2h1v1.4h-1zM0 206.2h2v1.4h-2z"/><path fill="#dcdcaa" fill-opacity="0.55" d="M19 42.2h2v1.4h-2zM23 42.2h3v1.4h-3zM4 48.2h3v1.4h-3zM8 48.2h2v1.4h-2zM11 48.2h1v1.4h-1zM4 54.2h3v1.4h-3zM17 54.2h3v1.4h-3zM4 58.2h3v1.4h-3zM16 58.2h1v1.4h-1zM19 58.2h4v1.4h-4zM24 58.2h1v1.4h-1zM4 68.2h3v1.4h-3zM4 72.2h3v1.4h-3zM4 76.2h3v1.4h-3zM4 80.2h3v1.4h-3zM4 84.2h3v1.4h-3zM4 88.2h3v1.4h-3zM4 92.2h3v1.4h-3zM4 96.2h3v1.4h-3zM4 100.2h3v1.4h-3zM4 104.2h3v1.4h-3zM4 108.2h3v1.4h-3zM4 112.2h3v1.4h-3zM4 116.2h3v1.4h-3zM4 120.2h3v1.4h-3zM4 126.2h3v1.4h-3zM12 132.2h2v1.4h-2zM15 132.2h1v1.4h-1zM5 138.2h1v1.4h-1zM6 140.2h3v1.4h-3zM4 146.2h3v1.4h-3zM9 150.2h1v1.4h-1zM17 150.2h1v1.4h-1zM21 150.2h1v1.4h-1zM25 150.2h1v1.4h-1zM6 160.2h1v1.4h-1zM8 160.2h2v1.4h-2zM11 162.2h1v1.4h-1zM31 176.2h2v1.4h-2zM34 176.2h1v1.4h-1zM40 176.2h1v1.4h-1zM45 176.2h1v1.4h-1zM52 176.2h1v1.4h-1zM55 176.2h2v1.4h-2zM20 184.2h6v1.4h-6zM7 202.2h2v1.4h-2zM11 204.2h1v1.4h-1z"/><path fill="#dcdcaa" fill-opacity="0.72" d="M21 42.2h1v1.4h-1zM23 58.2h1v1.4h-1zM25 58.2h1v1.4h-1zM16 132.2h1v1.4h-1zM4 138.2h1v1.4h-1zM9 140.2h1v1.4h-1zM10 150.2h1v1.4h-1zM22 150.2h1v1.4h-1zM12 162.2h1v1.4h-1zM33 176.2h1v1.4h-1zM35 176.2h1v1.4h-1zM41 176.2h1v1.4h-1zM46 176.2h1v1.4h-1zM12 204.2h1v1.4h-1z"/><path fill="#dcdcaa" fill-opacity="0.40" d="M22 42.2h1v1.4h-1zM10 48.2h1v1.4h-1zM16 54.2h1v1.4h-1zM17 58.2h2v1.4h-2zM14 132.2h1v1.4h-1zM6 138.2h1v1.4h-1zM8 150.2h1v1.4h-1zM18 150.2h3v1.4h-3zM23 150.2h2v1.4h-2zM4 160.2h2v1.4h-2zM7 160.2h1v1.4h-1zM10 162.2h1v1.4h-1zM30 176.2h1v1.4h-1zM39 176.2h1v1.4h-1zM42 176.2h3v1.4h-3zM53 176.2h2v1.4h-2zM26 184.2h1v1.4h-1zM10 204.2h1v1.4h-1z"/><path fill="#6a9955" fill-opacity="0.40" d="M0 46.2h2v1.4h-2zM5 46.2h2v1.4h-2zM9 46.2h1v1.4h-1zM0 52.2h2v1.4h-2zM4 52.2h1v1.4h-1zM7 52.2h1v1.4h-1zM11 52.2h1v1.4h-1zM14 52.2h1v1.4h-1zM16 52.2h1v1.4h-1zM19 52.2h2v1.4h-2zM22 52.2h1v1.4h-1zM24 52.2h1v1.4h-1zM0 66.2h2v1.4h-2zM6 66.2h1v1.4h-1zM0 124.2h2v1.4h-2zM5 124.2h1v1.4h-1zM15 124.2h1v1.4h-1zM18 124.2h1v1.4h-1zM21 124.2h1v1.4h-1zM24 124.2h1v1.4h-1zM27 124.2h1v1.4h-1zM0 158.2h2v1.4h-2zM4 158.2h1v1.4h-1zM6 158.2h2v1.4h-2zM9 158.2h1v1.4h-1zM15 158.2h1v1.4h-1zM18 158.2h1v1.4h-1z"/><path fill="#6a9955" fill-opacity="0.55" d="M2 46.2h3v1.4h-3zM8 46.2h1v1.4h-1zM10 46.2h1v1.4h-1zM12 46.2h1v1.4h-1zM8 52.2h1v1.4h-1zM10 52.2h1v1.4h-1zM12 52.2h1v1.4h-1zM15 52.2h1v1.4h-1zM18 52.2h1v1.4h-1zM21 52.2h1v1.4h-1zM25 52.2h3v1.4h-3zM4 66.2h2v1.4h-2zM7 66.2h2v1.4h-2zM4 124.2h1v1.4h-1zM6 124.2h2v1.4h-2zM11 124.2h1v1.4h-1zM14 124.2h1v1.4h-1zM20 124.2h1v1.4h-1zM25 124.2h1v1.4h-1zM30 124.2h3v1.4h-3zM5 158.2h1v1.4h-1zM10 158.2h2v1.4h-2zM13 158.2h2v1.4h-2zM16 158.2h2v1.4h-2z"/><path fill="#6a9955" fill-opacity="0.72" d="M7 46.2h1v1.4h-1zM13 46.2h3v1.4h-3zM3 52.2h1v1.4h-1zM5 52.2h2v1.4h-2zM9 52.2h1v1.4h-1zM3 66.2h1v1.4h-1zM3 124.2h1v1.4h-1zM9 124.2h2v1.4h-2zM12 124.2h2v1.4h-2zM17 124.2h1v1.4h-1zM26 124.2h1v1.4h-1zM29 124.2h1v1.4h-1zM3 158.2h1v1.4h-1z"/><path fill="#4fc1ff" fill-opacity="0.40" d="M35 68.2h1v1.4h-1zM39 68.2h1v1.4h-1zM35 72.2h1v1.4h-1zM39 72.2h1v1.4h-1zM43 72.2h1v1.4h-1zM47 72.2h1v1.4h-1zM34 76.2h1v1.4h-1zM41 76.2h1v1.4h-1zM45 76.2h1v1.4h-1zM37 80.2h1v1.4h-1zM39 80.2h1v1.4h-1zM43 80.2h1v1.4h-1zM36 84.2h4v1.4h-4zM42 84.2h2v1.4h-2zM46 84.2h2v1.4h-2zM51 84.2h1v1.4h-1zM28 88.2h2v1.4h-2zM35 88.2h1v1.4h-1zM39 88.2h1v1.4h-1zM36 92.2h1v1.4h-1zM38 92.2h2v1.4h-2zM43 92.2h1v1.4h-1zM34 96.2h1v1.4h-1zM36 96.2h1v1.4h-1zM39 96.2h1v1.4h-1zM42 96.2h2v1.4h-2zM47 96.2h1v1.4h-1zM36 100.2h1v1.4h-1zM43 100.2h1v1.4h-1zM46 100.2h2v1.4h-2zM51 100.2h1v1.4h-1zM39 104.2h1v1.4h-1zM48 104.2h1v1.4h-1zM51 104.2h1v1.4h-1zM55 104.2h1v1.4h-1zM39 108.2h1v1.4h-1zM42 108.2h1v1.4h-1zM44 108.2h1v1.4h-1zM47 108.2h2v1.4h-2zM50 108.2h1v1.4h-1zM55 108.2h1v1.4h-1zM32 112.2h1v1.4h-1zM35 112.2h2v1.4h-2zM38 112.2h1v1.4h-1zM41 112.2h1v1.4h-1zM45 112.2h1v1.4h-1zM41 116.2h1v1.4h-1zM44 116.2h1v1.4h-1zM46 116.2h1v1.4h-1zM48 116.2h1v1.4h-1zM53 116.2h1v1.4h-1zM59 116.2h1v1.4h-1zM37 120.2h1v1.4h-1zM44 120.2h2v1.4h-2zM47 120.2h1v1.4h-1zM51 120.2h1v1.4h-1zM24 132.2h1v1.4h-1zM33 150.2h1v1.4h-1zM7 170.2h1v1.4h-1zM9 170.2h1v1.4h-1zM13 170.2h1v1.4h-1zM9 172.2h1v1.4h-1zM8 174.2h2v1.4h-2zM12 174.2h2v1.4h-2zM7 176.2h2v1.4h-2zM11 176.2h2v1.4h-2zM12 180.2h1v1.4h-1zM14 180.2h2v1.4h-2zM23 180.2h1v1.4h-1zM25 180.2h1v1.4h-1zM29 180.2h1v1.4h-1zM39 180.2h1v1.4h-1zM46 180.2h2v1.4h-2zM50 180.2h2v1.4h-2zM7 184.2h2v1.4h-2zM11 184.2h1v1.4h-1zM34 184.2h1v1.4h-1zM36 184.2h2v1.4h-2zM1 202.2h2v1.4h-2zM5 202.2h1v1.4h-1z"/><path fill="#6a9955" fill-opacity="0.22" d="M23 124.2h1v1.4h-1zM28 124.2h1v1.4h-1zM33 124.2h1v1.4h-1z"/><path fill="#b5cea8" fill-opacity="0.55" d="M46 150.2h1v1.4h-1zM33 154.2h1v1.4h-1zM58 176.2h1v1.4h-1zM18 190.2h1v1.4h-1z"/><path fill="#b5cea8" fill-opacity="0.72" d="M34 154.2h1v1.4h-1zM36 154.2h1v1.4h-1zM49 176.2h1v1.4h-1zM19 190.2h3v1.4h-3zM20 196.2h3v1.4h-3z"/><path fill="#b5cea8" fill-opacity="0.40" d="M35 154.2h1v1.4h-1zM48 176.2h1v1.4h-1zM19 196.2h1v1.4h-1z"/></svg>
<div style="left:1725px;top:283px;width:2.2px;height:44px;background:#2ea043;"></div>
<div style="left:1725px;top:152px;width:2.2px;height:2.2px;background:#2ea043;"></div>
<div style="left:1843px;top:115px;width:1px;height:531px;background:#0d0d0d;"></div>
<div style="left:1843px;top:115px;width:17px;height:1px;background:#0d0d0d;"></div>
<div style="left:1844px;top:196px;width:5.5px;height:6px;background:#2a6f38;"></div>
<div style="left:1844px;top:464.5px;width:16px;height:92px;background:#424242;"></div>
<div style="left:1844px;top:464.5px;width:5.5px;height:92px;background:#4a7f55;"></div>
<div style="left:1844px;top:515px;width:16px;height:2px;background:#9a9a9a;"></div>
<span class="s" style="left:25.00px;top:661.89px;font-size:13.6px;color:#9d9d9d;letter-spacing:-1.068px;">PROBLEMS</span>
<span class="s" style="left:122.00px;top:661.89px;font-size:13.6px;color:#9d9d9d;letter-spacing:-0.764px;">OUTPUT</span>
<span class="s" style="left:203.80px;top:661.89px;font-size:13.6px;color:#9d9d9d;letter-spacing:-0.923px;">DEBUG CONSOLE</span>
<span class="s" style="left:340.80px;top:661.89px;font-size:13.6px;color:#e7e7e7;letter-spacing:-0.617px;">TERMINAL</span>
<span class="s" style="left:434.60px;top:661.89px;font-size:13.6px;color:#9d9d9d;letter-spacing:-1.396px;">PORTS</span>
<span class="s" style="left:504.60px;top:661.89px;font-size:13.6px;color:#9d9d9d;letter-spacing:-1.052px;">GITLENS</span>
<div style="left:338px;top:684px;width:69px;height:1px;background:#0078d4;"></div>
<span class="m" style="left:25px;top:709.96px;font-size:15.7px;letter-spacing:-0.420px;color:#d0d0d0">  "components": {</span>
<span class="m" style="left:25px;top:731.96px;font-size:15.7px;letter-spacing:-0.420px;color:#d0d0d0">    "securitySchemes": {}</span>
<span class="m" style="left:25px;top:753.96px;font-size:15.7px;letter-spacing:-0.420px;color:#d0d0d0">  },</span>
<span class="m" style="left:25px;top:775.96px;font-size:15.7px;letter-spacing:-0.420px;color:#d0d0d0">  "security": [</span>
<span class="m" style="left:25px;top:797.96px;font-size:15.7px;letter-spacing:-0.420px;color:#d0d0d0">    {</span>
<span class="m" style="left:25px;top:819.96px;font-size:15.7px;letter-spacing:-0.420px;color:#d0d0d0">      "Language": []</span>
<span class="m" style="left:25px;top:841.96px;font-size:15.7px;letter-spacing:-0.420px;color:#d0d0d0">    }</span>
<span class="m" style="left:25px;top:863.96px;font-size:15.7px;letter-spacing:-0.420px;color:#d0d0d0">  ],</span>
<span class="m" style="left:25px;top:885.96px;font-size:15.7px;letter-spacing:-0.420px;color:#d0d0d0">  "paths": {}</span>
<span class="m" style="left:25px;top:907.96px;font-size:15.7px;letter-spacing:-0.420px;color:#d0d0d0">}</span>
<span class="m" style="left:25px;top:929.96px;font-size:15.7px;letter-spacing:-0.420px;color:#d0d0d0">Server is running on port 3010</span>
<span class="m" style="left:25px;top:951.96px;font-size:15.7px;letter-spacing:-0.420px;color:#d0d0d0">Connected sdfsd</span>
<div style="left:25px;top:968px;width:9px;height:22px;border:1px solid #cccccc;box-sizing:border-box"></div>
<svg style="left:1708px;top:659.4px;" width="18" height="18" viewBox="0 0 18 18"><path d="M8.8 0.2 V17.4 M0.6 8.9 H17" stroke="#cccccc" stroke-width="1.45" fill="none"/></svg>
<svg style="left:1732px;top:664px;" width="12" height="9" viewBox="0 0 12 9"><path d="M1.2 1.8 L5.8 6.6 L10.4 1.8" stroke="#cccccc" stroke-width="1.2" fill="none"/></svg>
<svg style="left:1757px;top:665px;" width="20" height="6" viewBox="0 0 20 6"><circle cx="3" cy="3.4" r="1.25" fill="#cccccc"/><circle cx="9.6" cy="3.4" r="1.25" fill="#cccccc"/><circle cx="16.2" cy="3.4" r="1.25" fill="#cccccc"/></svg>
<svg style="left:1791px;top:662px;" width="16" height="12" viewBox="0 0 16 12"><path d="M1.6 9.6 L7.9 3.2 L14.2 9.6" stroke="#cccccc" stroke-width="1.45" fill="none"/></svg>
<svg style="left:1824px;top:662px;" width="14" height="14" viewBox="0 0 14 14"><path d="M2.2 1.8 L12.8 12.4 M12.8 1.8 L2.2 12.4" stroke="#cccccc" stroke-width="1.45" fill="none"/></svg>
<div style="left:1711px;top:690px;width:1px;height:303px;background:#2b2b2b;"></div>
<div style="left:1712px;top:690px;width:148px;height:28px;background:#37373d;"></div>
<div style="left:1711px;top:690px;width:1px;height:28px;background:#0078d4;"></div>
<svg style="left:1724px;top:694.7px;transform:skewX(-5deg)" width="20" height="19" viewBox="0 0 20 19"><rect x="0.9" y="0.9" width="17.6" height="16.8" rx="1.8" stroke="#cccccc" stroke-width="1.3" fill="none"/><path d="M4.2 5.4 L8.4 8.6 L4.2 11.8 M9.6 12.8 H14.6" stroke="#cccccc" stroke-width="1.3" fill="none"/></svg>
<svg style="left:1724px;top:722.7px;transform:skewX(-5deg)" width="20" height="19" viewBox="0 0 20 19"><rect x="0.9" y="0.9" width="17.6" height="16.8" rx="1.8" stroke="#cccccc" stroke-width="1.3" fill="none"/><path d="M4.2 5.4 L8.4 8.6 L4.2 11.8 M9.6 12.8 H14.6" stroke="#cccccc" stroke-width="1.3" fill="none"/></svg>
<span class="s" style="left:1748.30px;top:697.30px;font-size:15px;color:#cccccc;letter-spacing:0.633px;">node</span>
<span class="s" style="left:1748.30px;top:725.30px;font-size:15px;color:#cccccc;letter-spacing:0.520px;">powershell</span>
<div style="left:1697.5px;top:704.5px;width:4px;height:8.5px;background:#1f86c4;"></div>
<div style="left:1697.5px;top:730px;width:4px;height:8.5px;background:#1f86c4;"></div>
<div style="left:1697.5px;top:761.5px;width:4px;height:8.5px;background:#5a5a5a;"></div>
<div style="left:0px;top:994px;width:43px;height:23px;background:#0078d4;"></div>
<svg style="left:0px;top:990px;" width="43" height="27" viewBox="0 0 43 27"><path d="M15 13.2 L20.7 17.8 L15 22.4 M27 9 L21.9 13.7 L27 18.4" stroke="#ffffff" stroke-width="1.4" fill="none"/></svg>
<svg style="left:50.3px;top:995.8px;" width="17" height="20" viewBox="0 0 17 20"><g stroke="#cccccc" stroke-width="1.5" fill="none"><circle cx="4.4" cy="4" r="2.3"/><circle cx="4.4" cy="16" r="2.3"/><circle cx="12.6" cy="6.6" r="2.3"/><path d="M4.4 6.3 V13.7 M12.6 8.9 C12.6 12 7 11 4.6 13.6"/></g></svg>
<span class="s" style="left:72.30px;top:1000.38px;font-size:14.2px;color:#cccccc;letter-spacing:0.397px;">feature/5170-user-api*</span>
<svg style="left:229.5px;top:997px;" width="20" height="19" viewBox="0 0 20 19"><g stroke="#cccccc" stroke-width="1.5" fill="none"><path d="M4.2 8.6 A5.8 5.8 0 0 1 15.2 6.4 M15.8 10.4 A5.8 5.8 0 0 1 4.8 12.6"/></g><path d="M12.2 7.4 L18.8 7.4 L15.5 11.2 Z M1.2 11.6 L7.8 11.6 L4.5 7.8 Z" fill="#cccccc"/></svg>
<svg style="left:265px;top:996px;" width="17" height="20" viewBox="0 0 17 20"><g stroke="#cccccc" stroke-width="1.5" fill="none"><circle cx="4" cy="4.6" r="2.2"/><circle cx="4" cy="14.6" r="2.2"/><path d="M4 6.8 V12.4"/><path d="M8.2 2.6 V18 M13 11.8 C13 14.6 10.6 14.4 8.4 15.6"/><circle cx="13" cy="9.6" r="2.2"/></g></svg>
<svg style="left:303px;top:997.6px;" width="17" height="17" viewBox="0 0 17 17"><g stroke="#cccccc" stroke-width="1.5" fill="none"><circle cx="8.5" cy="8.5" r="7.3"/><path d="M5.4 5.4 L11.6 11.6 M11.6 5.4 L5.4 11.6"/></g></svg>
<span class="s" style="left:324.60px;top:1000.38px;font-size:14.2px;color:#cccccc;">0</span>
<svg style="left:338px;top:998px;" width="16" height="16" viewBox="0 0 16 16"><g stroke="#cccccc" stroke-width="1.5" fill="none" stroke-linejoin="round"><path d="M8 1.4 L15.2 14 H0.8 Z"/><path d="M8 5.8 V10 M8 11.2 V12.8"/></g></svg>
<span class="s" style="left:358.40px;top:1000.38px;font-size:14.2px;color:#cccccc;">0</span>
<svg style="left:388px;top:997.3px;" width="16" height="18" viewBox="0 0 16 18"><g stroke="#cccccc" stroke-width="1.5" fill="none"><circle cx="8" cy="6.6" r="1.7"/><path d="M7.4 8.4 L4 17 M8.6 8.4 L12 17 M5.4 13.4 H10.6"/><path d="M4.6 3 A5 5 0 0 0 4.6 10.2 M11.4 3 A5 5 0 0 1 11.4 10.2 M2.2 0.8 A8 8 0 0 0 2.2 12.4 M13.8 0.8 A8 8 0 0 1 13.8 12.4"/></g></svg>
<span class="s" style="left:408.00px;top:1000.38px;font-size:14.2px;color:#cccccc;">0</span>
<svg style="left:436px;top:998px;" width="18" height="16" viewBox="0 0 18 16"><path d="M3.6 0.6 H14.4 a2 2 0 0 1 2 2 V4.6 a3 3 0 0 0 1.4 3.4 a3 3 0 0 0 -1.4 3.4 V13.4 a2 2 0 0 1 -2 2 H3.6 a2 2 0 0 1 -2 -2 V11.4 a3 3 0 0 0 -1.4 -3.4 a3 3 0 0 0 1.4 -3.4 V2.6 a2 2 0 0 1 2 -2 Z" fill="#cccccc"/></svg>
<span class="s" style="left:441.60px;top:1002.13px;font-size:10px;color:#181818;">B</span>
<span class="s" style="left:458.60px;top:1000.38px;font-size:14.2px;color:#cccccc;letter-spacing:0.151px;">Bootstrap v5.3</span>
<svg style="left:1212.3px;top:997.3px;" width="14" height="18" viewBox="0 0 14 18"><g stroke="#cccccc" stroke-width="1.4" fill="none"><circle cx="7" cy="8.6" r="3.9"/><path d="M7 0.6 V4.7 M7 12.5 V17"/></g></svg>
<span class="s" style="left:1231.80px;top:1000.38px;font-size:14.2px;color:#cccccc;letter-spacing:0.137px;">You, 22 seconds ago</span>
<span class="s" style="left:1387.00px;top:1000.38px;font-size:14.2px;color:#cccccc;letter-spacing:0.062px;">Ln 97, Col 20</span>
<span class="s" style="left:1492.00px;top:1000.38px;font-size:14.2px;color:#cccccc;letter-spacing:-0.277px;">Spaces: 2</span>
<span class="s" style="left:1573.00px;top:1000.38px;font-size:14.2px;color:#cccccc;letter-spacing:-0.119px;">UTF-8</span>
<span class="s" style="left:1632.60px;top:1000.38px;font-size:14.2px;color:#cccccc;letter-spacing:-1.212px;">CRLF</span>
<span class="s" style="left:1684.60px;top:999.08px;font-size:15.5px;color:#cccccc;letter-spacing:2.223px;">{}</span>
<span class="s" style="left:1708.00px;top:1000.38px;font-size:14.2px;color:#cccccc;letter-spacing:0.138px;">TypeScript</span>
<svg style="left:1793px;top:1000px;" width="20" height="13" viewBox="0 0 20 13"><path d="M1 7.8 L4.6 11.4 L13.4 1.6 M8 9.4 L10 11.4 L18.8 1.6" stroke="#cccccc" stroke-width="1.5" fill="none"/></svg>
<span class="s" style="left:1816.20px;top:1000.38px;font-size:14.2px;color:#cccccc;letter-spacing:0.184px;">Prettier</span>
<svg style="left:1885px;top:997px;" width="17" height="19" viewBox="0 0 17 19"><g stroke="#cccccc" stroke-width="1.5" fill="none" stroke-linejoin="round"><path d="M8.4 1.6 C4.8 1.6 3.4 4.4 3.4 7.4 V11.4 L1.6 14.4 H15.2 L13.4 11.4 V7.4 C13.4 4.4 12 1.6 8.4 1.6 Z"/><path d="M6.6 14.6 a1.9 1.9 0 0 0 3.6 0"/></g></svg>
</body></html>
